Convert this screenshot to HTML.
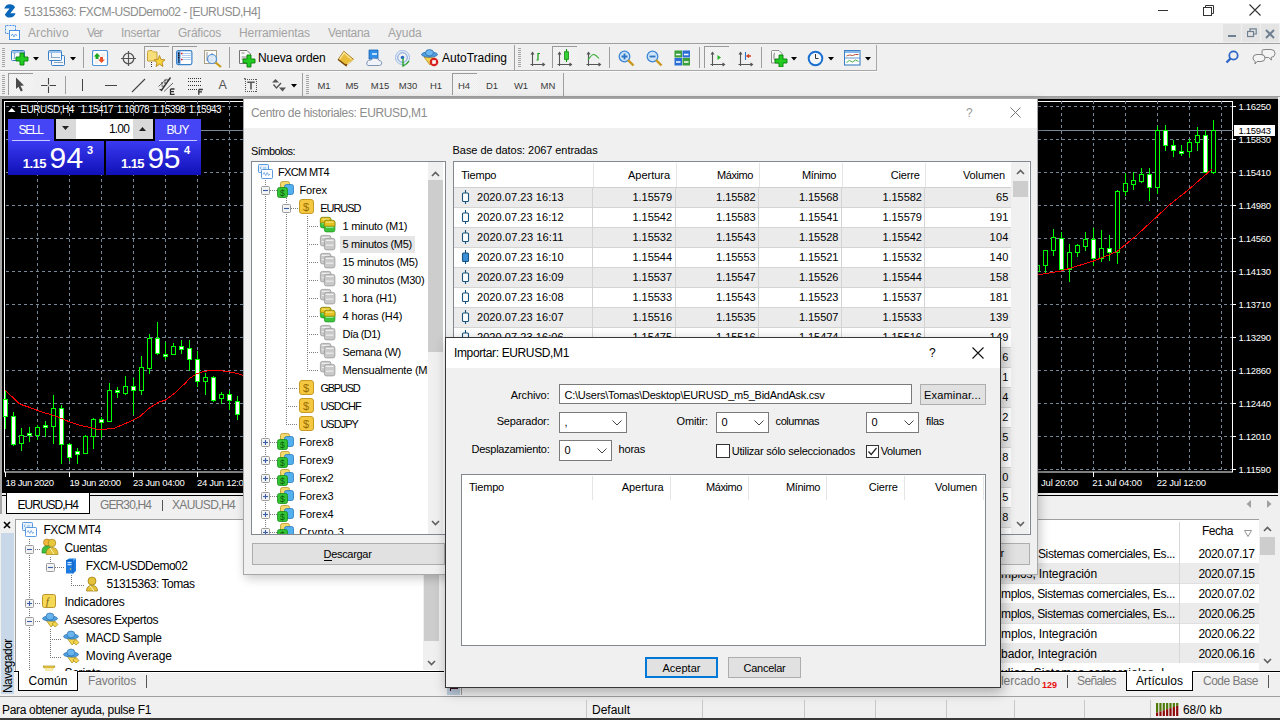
<!DOCTYPE html><html><head><meta charset="utf-8"><style>
html,body{margin:0;padding:0;width:1280px;height:720px;overflow:hidden;background:#f0f0f0;}
body{position:relative;font-family:"Liberation Sans",sans-serif;}
body div,body svg{position:absolute;box-sizing:border-box;}
</style></head><body><div style="left:0px;top:0px;width:1280px;height:23px;background:#fff;"></div><svg style="left:0;top:0" width="22" height="22"><path d="M4.2,8.6 Q5.8,4.2 9.8,4.2 Q13.6,4.2 15.1,7.3 L10.3,13.3 H15.6 Q14.2,17.5 9.8,17.5 Q5.8,17.5 4.9,14.4 L9.5,8.6 Z" fill="#0a66b8"/></svg><div style="left:24.00px;top:6.14px;font-size:12px;line-height:12px;color:#8c8c8c;white-space:pre;letter-spacing:-0.511px;">51315363: FXCM-USDDemo02 - [EURUSD,H4]</div><div style="left:1158px;top:10px;width:10px;height:1px;background:#333;"></div><svg style="left:1203px;top:5px" width="12" height="12"><rect x="0.5" y="2.5" width="8" height="8" fill="none" stroke="#333"/><path d="M2.5,2.5 V0.5 H10.5 V8.5 H8.5" fill="none" stroke="#333"/></svg><svg style="left:1249px;top:4px" width="12" height="12"><path d="M0.5,0.5 L11.5,11.5 M11.5,0.5 L0.5,11.5" stroke="#333" stroke-width="1.1"/></svg><div style="left:0px;top:23px;width:1280px;height:20px;background:#f0f0f0;"></div><div style="left:0px;top:43px;width:1280px;height:1px;background:#a0a0a0;"></div><div style="left:28.00px;top:27.14px;font-size:12px;line-height:12px;color:#a3a3a3;white-space:pre;letter-spacing:0.105px;">Archivo</div><div style="left:87.00px;top:27.14px;font-size:12px;line-height:12px;color:#a3a3a3;white-space:pre;letter-spacing:-0.839px;">Ver</div><div style="left:121.00px;top:27.14px;font-size:12px;line-height:12px;color:#a3a3a3;white-space:pre;letter-spacing:-0.211px;">Insertar</div><div style="left:178.00px;top:27.14px;font-size:12px;line-height:12px;color:#a3a3a3;white-space:pre;letter-spacing:-0.211px;">Gráficos</div><div style="left:239.00px;top:27.14px;font-size:12px;line-height:12px;color:#a3a3a3;white-space:pre;letter-spacing:-0.086px;">Herramientas</div><div style="left:328.00px;top:27.14px;font-size:12px;line-height:12px;color:#a3a3a3;white-space:pre;letter-spacing:-0.364px;">Ventana</div><div style="left:388.00px;top:27.14px;font-size:12px;line-height:12px;color:#a3a3a3;white-space:pre;letter-spacing:-0.013px;">Ayuda</div><svg style="left:5px;top:25px" width="15" height="15"><rect x="0.5" y="0.5" width="10" height="8" fill="#eaf2fb" stroke="#4a90e2" stroke-dasharray="1,0.5"/><rect x="4.5" y="5.5" width="10" height="9" fill="#fff" stroke="#4a90e2"/><path d="M6,11 l1.5,-2 l1.5,3 l1.5,-3 l1.5,2" fill="none" stroke="#4a90e2" stroke-width="0.8"/></svg><div style="left:1223px;top:24px;width:18px;height:18px;background:#e4e4e4;"></div><div style="left:1242px;top:24px;width:18px;height:18px;background:#e4e4e4;"></div><div style="left:1261px;top:24px;width:18px;height:18px;background:#e4e4e4;"></div><div style="left:1228px;top:35px;width:8px;height:2px;background:#6d7f91;"></div><svg style="left:1247px;top:28px" width="10" height="10"><rect x="0.5" y="3.5" width="6" height="5" fill="none" stroke="#6d7f91" stroke-width="1.2"/><path d="M3,3.5 V0.8 H9.2 V6 H6.5" fill="none" stroke="#6d7f91" stroke-width="1.2"/></svg><svg style="left:1265px;top:29px" width="10" height="10"><path d="M1,1 L9,9 M9,1 L1,9" stroke="#6d7f91" stroke-width="2"/></svg><div style="left:0px;top:44px;width:1280px;height:27px;background:#f0f0f0;"></div><div style="left:0px;top:70px;width:877px;height:1px;background:#a8a8a8;"></div><div style="left:876px;top:45px;width:1px;height:26px;background:#a8a8a8;"></div><div style="left:0px;top:71px;width:1280px;height:26px;background:#f0f0f0;"></div><div style="left:0px;top:71px;width:877px;height:1px;background:#fafafa;"></div><div style="left:0px;top:96px;width:1280px;height:1px;background:#a0a0a0;"></div><svg style="left:2px;top:48px" width="3" height="19" viewBox="0 0 3 19"><rect x="0" y="0" width="3" height="1" fill="#a5a5a5"/><rect x="0" y="2" width="3" height="1" fill="#a5a5a5"/><rect x="0" y="4" width="3" height="1" fill="#a5a5a5"/><rect x="0" y="6" width="3" height="1" fill="#a5a5a5"/><rect x="0" y="8" width="3" height="1" fill="#a5a5a5"/><rect x="0" y="10" width="3" height="1" fill="#a5a5a5"/><rect x="0" y="12" width="3" height="1" fill="#a5a5a5"/><rect x="0" y="14" width="3" height="1" fill="#a5a5a5"/><rect x="0" y="16" width="3" height="1" fill="#a5a5a5"/><rect x="0" y="18" width="3" height="1" fill="#a5a5a5"/></svg><svg style="left:11px;top:50px" width="18" height="16" viewBox="0 0 18 16"><rect x="0.5" y="0.5" width="13" height="10" rx="1" fill="#f4f8fc" stroke="#3b7fc4"/><rect x="1" y="1" width="12" height="2" fill="#9cc3ea"/><path d="M3.5,3 v6 M2.5,4 l1,-1 1,1 M2.5,8 l1,1 1,-1" stroke="#7a9cbf" stroke-width="0.8" fill="none"/><path d="M9,3 h4 v4 h4 v4 h-4 v4 h-4 v-4 h-4 v-4 h4z" fill="#22cc22" stroke="#0a7d0a" stroke-width="0.9"/></svg><svg style="left:33px;top:57px" width="6" height="4" viewBox="0 0 6 4"><path d="M0,0 H6 L3,3.5Z" fill="#000"/></svg><svg style="left:48px;top:50px" width="18" height="17" viewBox="0 0 18 17"><rect x="3.5" y="5.5" width="13" height="10" rx="1" fill="#f4f8fc" stroke="#3b7fc4"/><rect x="0.5" y="0.5" width="13" height="10" rx="1" fill="#f4f8fc" stroke="#3b7fc4"/><rect x="1" y="1" width="12" height="2" fill="#9cc3ea"/><path d="M3.5,3 v5 M3,7.5 h9 M6,12.5 h9" stroke="#7a9cbf" stroke-width="0.9" fill="none"/></svg><svg style="left:70px;top:57px" width="6" height="4" viewBox="0 0 6 4"><path d="M0,0 H6 L3,3.5Z" fill="#000"/></svg><div style="left:83px;top:47px;width:1px;height:21px;background:#a0a0a0;"></div><svg style="left:92px;top:50px" width="17" height="17" viewBox="0 0 17 17"><rect x="0.5" y="0.5" width="15" height="15" rx="1.5" fill="#fff" stroke="#4f94d8" stroke-width="1.2"/><path d="M4,3 L7.5,6.5 H5.5 V9 H2.5 V6.5 H0.8Z" fill="#1da61d" transform="translate(1,0)"/><path d="M9.5,13 L6,9.5 H8 V7 H11 V9.5 H13Z" fill="#e8532b" transform="translate(0,0)"/><path d="M9,4h4 M9,6h4 M3,11h3 M3,13h3" stroke="#ccc" stroke-width="0.6"/></svg><svg style="left:120px;top:50px" width="17" height="17" viewBox="0 0 17 17"><circle cx="8.5" cy="8.5" r="5.3" fill="none" stroke="#555" stroke-width="1.3"/><path d="M8.5,1 V16 M1,8.5 H16" stroke="#555" stroke-width="1.2"/></svg><div style="left:144px;top:46px;width:25px;height:22px;border-left:1px solid #9a9a9a;border-top:1px solid #9a9a9a;background-color:#f7f7f7;background-image:linear-gradient(45deg,#ececec 25%,transparent 25%,transparent 75%,#ececec 75%),linear-gradient(45deg,#ececec 25%,transparent 25%,transparent 75%,#ececec 75%);background-size:2px 2px;background-position:0 0,1px 1px;"></div><svg style="left:147px;top:50px" width="19" height="17" viewBox="0 0 19 17"><path d="M0.5,2.5 Q0.5,0.5 2.5,0.5 H5 L6.5,2 H10 V11 H0.5Z" fill="#f6df7a" stroke="#c59b2a" stroke-width="0.9"/><path d="M12.5,5.5 L14,9.5 L18,9.8 L15,12.4 L16,16.5 L12.5,14.2 L9,16.5 L10,12.4 L7,9.8 L11,9.5Z" fill="#f7d63c" stroke="#b9861c" stroke-width="0.9"/><path d="M4.5,12 v5" stroke="#333" stroke-dasharray="1,1"/></svg><div style="left:172px;top:46px;width:25px;height:22px;border-left:1px solid #9a9a9a;border-top:1px solid #9a9a9a;background-color:#f7f7f7;background-image:linear-gradient(45deg,#ececec 25%,transparent 25%,transparent 75%,#ececec 75%),linear-gradient(45deg,#ececec 25%,transparent 25%,transparent 75%,#ececec 75%);background-size:2px 2px;background-position:0 0,1px 1px;"></div><svg style="left:176px;top:50px" width="17" height="16" viewBox="0 0 17 16"><rect x="0.6" y="0.6" width="15.3" height="14" rx="1.8" fill="#fff" stroke="#3c82c9" stroke-width="1.2"/><rect x="1.3" y="1.3" width="3.2" height="12.6" fill="#5b9be0"/><rect x="2" y="8" width="1.6" height="5" fill="#2a4c7a"/><rect x="2" y="2.5" width="1.5" height="1.5" fill="#111"/><rect x="2" y="4.5" width="1.5" height="1.5" fill="#111"/><rect x="2" y="6.5" width="1.5" height="1.5" fill="#111"/><path d="M6,3.5 H15 M6,5.5 H15 M6,7.5 H15 M6,9.5 H15" stroke="#b3cdf0" stroke-width="1" shape-rendering="crispEdges"/><rect x="5" y="2.8" width="1.5" height="1.5" fill="#e02020"/><rect x="5" y="8.8" width="1.5" height="1.5" fill="#e02020"/></svg><svg style="left:204px;top:50px" width="19" height="18" viewBox="0 0 19 18"><rect x="0.5" y="0.5" width="12" height="13" fill="#fdfcf8" stroke="#a89f86"/><path d="M3,2 v9 M3,10 h7 M8,3 v5" stroke="#777" stroke-width="0.8"/><circle cx="8" cy="9" r="4.5" fill="#dbe9f7" fill-opacity="0.85" stroke="#4f8fd8" stroke-width="1.2"/><path d="M11.5,12.5 L17,17" stroke="#c99a1a" stroke-width="2.2"/></svg><div style="left:229px;top:47px;width:1px;height:21px;background:#a0a0a0;"></div><svg style="left:239px;top:50px" width="17" height="18" viewBox="0 0 17 18"><path d="M0.5,0.5 H8 L11.5,4 V13.5 H0.5Z" fill="#fbfbfb" stroke="#666" stroke-width="0.9"/><path d="M2.5,3 h3 M2.5,7 h6 M2.5,9 h5" stroke="#888"/><path d="M8,5 h4 v4 h4 v4 h-4 v4 h-4 v-4 h-4 v-4 h4z" fill="#22cc22" stroke="#0a7d0a" stroke-width="0.9"/></svg><div style="left:258.00px;top:52.04px;font-size:12px;line-height:12px;color:#000;white-space:pre;letter-spacing:-0.102px;">Nueva orden</div><svg style="left:337px;top:50px" width="18" height="17" viewBox="0 0 18 17"><path d="M1.2,9.5 L6.8,1.3 L16.7,9.5 L9,15.6Z" fill="#e9bd3a" stroke="#9a6a12" stroke-width="0.9"/><path d="M2.5,9.3 L7,2.8 L14.5,9.2" fill="none" stroke="#fbe79a" stroke-width="1.3"/><path d="M1.2,9.5 L9,15.6 L9.5,14" stroke="#7a4a08" stroke-width="1.5" fill="none"/><path d="M10,14.5 L16.5,9.6" stroke="#fff3c0" stroke-width="0.9"/></svg><svg style="left:366px;top:49px" width="17" height="18" viewBox="0 0 17 18"><path d="M3,1 H12 V10 H3Z" fill="#2f8ee8" stroke="#1b64b5" stroke-width="0.8"/><rect x="6" y="4" width="5" height="2" fill="#bfe0ff"/><path d="M2,16.5 Q0,16 1,13 Q2,10.5 5,11 Q7,8 10,9.5 Q12.5,9 13,11.5 Q16.5,12 15.5,15 Q15,16.5 13.5,16.5Z" fill="#f0f4fa" stroke="#6e88aa" stroke-width="0.9"/></svg><svg style="left:394px;top:50px" width="17" height="17" viewBox="0 0 17 17"><circle cx="8.5" cy="7.5" r="7" fill="none" stroke="#8fb2e6" stroke-width="0.9"/><circle cx="8.5" cy="7.5" r="4.8" fill="none" stroke="#5b8fdc" stroke-width="0.9"/><circle cx="8.5" cy="7.5" r="1.8" fill="#2b67d1"/><path d="M9,8 V16 Q13,14.5 15,11" stroke="#2aa52a" stroke-width="1.4" fill="none"/></svg><svg style="left:421px;top:49px" width="18" height="18" viewBox="0 0 18 18"><path d="M3,8 L9,16 L14,9Z" fill="#f1d24a" stroke="#b48a1a" stroke-width="0.8"/><ellipse cx="8.5" cy="5.5" rx="8" ry="2.6" fill="#4f9ee0" stroke="#2c6fae" stroke-width="0.8"/><ellipse cx="8.5" cy="3.8" rx="4" ry="3.2" fill="#6db6ef" stroke="#2c6fae" stroke-width="0.8"/><circle cx="13" cy="13" r="4.3" fill="#d92323"/><rect x="11.2" y="11.2" width="3.6" height="3.6" fill="#fff"/></svg><div style="left:442.00px;top:52.04px;font-size:12px;line-height:12px;color:#000;white-space:pre;letter-spacing:0.006px;">AutoTrading</div><div style="left:514px;top:45px;width:1px;height:25px;background:#a0a0a0;"></div><svg style="left:518px;top:48px" width="3" height="19" viewBox="0 0 3 19"><rect x="0" y="0" width="3" height="1" fill="#a5a5a5"/><rect x="0" y="2" width="3" height="1" fill="#a5a5a5"/><rect x="0" y="4" width="3" height="1" fill="#a5a5a5"/><rect x="0" y="6" width="3" height="1" fill="#a5a5a5"/><rect x="0" y="8" width="3" height="1" fill="#a5a5a5"/><rect x="0" y="10" width="3" height="1" fill="#a5a5a5"/><rect x="0" y="12" width="3" height="1" fill="#a5a5a5"/><rect x="0" y="14" width="3" height="1" fill="#a5a5a5"/><rect x="0" y="16" width="3" height="1" fill="#a5a5a5"/><rect x="0" y="18" width="3" height="1" fill="#a5a5a5"/></svg><svg style="left:530px;top:51px" width="16" height="16" viewBox="0 0 16 16"><path d="M2.5,2 V15 M0.5,13.5 H14 M1,3.5 L2.5,1.5 L4,3.5 M12.5,12 L14.5,13.5 L12.5,15" stroke="#555" stroke-width="1.1" fill="none"/><path d="M6.5,9 H8 V2.5 H10" stroke="#129b12" stroke-width="1.2" fill="none"/></svg><div style="left:552px;top:46px;width:25px;height:22px;border-left:1px solid #9a9a9a;border-top:1px solid #9a9a9a;background-color:#f7f7f7;background-image:linear-gradient(45deg,#ececec 25%,transparent 25%,transparent 75%,#ececec 75%),linear-gradient(45deg,#ececec 25%,transparent 25%,transparent 75%,#ececec 75%);background-size:2px 2px;background-position:0 0,1px 1px;"></div><svg style="left:557px;top:49px" width="16" height="18" viewBox="0 0 16 18"><path d="M2.5,4 V17 M0.5,15.5 H14 M1,5.5 L2.5,3.5 L4,5.5 M12.5,14 L14.5,15.5 L12.5,17" stroke="#555" stroke-width="1.1" fill="none"/><path d="M9.5,0 V13" stroke="#129b12" stroke-width="1.2"/><rect x="7.5" y="2.8" width="4" height="7.5" fill="#35d135" stroke="#0f8a0f" stroke-width="0.8"/></svg><svg style="left:586px;top:51px" width="16" height="16" viewBox="0 0 16 16"><path d="M2.5,2 V15 M0.5,13.5 H14 M1,3.5 L2.5,1.5 L4,3.5 M12.5,12 L14.5,13.5 L12.5,15" stroke="#555" stroke-width="1.1" fill="none"/><path d="M2,9 Q6,3 8,3.5 Q10,4 13,7.5" stroke="#2fae2f" stroke-width="1.1" fill="none"/></svg><div style="left:609px;top:47px;width:1px;height:21px;background:#a0a0a0;"></div><svg style="left:618px;top:50px" width="17" height="17" viewBox="0 0 17 17"><circle cx="6.5" cy="6.5" r="5.3" fill="#cfe4f8" stroke="#3b86d6" stroke-width="1.3"/><path d="M10,10 L15.5,15.5" stroke="#c9971c" stroke-width="2.4"/><path d="M3.5,6.5 h6 M6.5,3.5 v6" stroke="#2e76c4" stroke-width="1.8"/></svg><svg style="left:646px;top:50px" width="17" height="17" viewBox="0 0 17 17"><circle cx="6.5" cy="6.5" r="5.3" fill="#cfe4f8" stroke="#3b86d6" stroke-width="1.3"/><path d="M10,10 L15.5,15.5" stroke="#c9971c" stroke-width="2.4"/><path d="M3.5,6.5 h6" stroke="#2e76c4" stroke-width="1.8"/></svg><svg style="left:674px;top:50px" width="17" height="16" viewBox="0 0 17 16"><rect x="0.5" y="0.5" width="7.5" height="7" fill="#3ba03b"/><rect x="8.5" y="0.5" width="7.5" height="7" fill="#2b6fd6"/><rect x="0.5" y="8" width="7.5" height="7.5" fill="#2b6fd6"/><rect x="8.5" y="8" width="7.5" height="7.5" fill="#3ba03b"/><path d="M2,4.5 h4.5 M10,4.5 h4.5 M2,12 h4.5 M10,12 h4.5" stroke="#fff" stroke-width="1.5"/></svg><div style="left:699px;top:47px;width:1px;height:21px;background:#a0a0a0;"></div><div style="left:704px;top:46px;width:25px;height:22px;border-left:1px solid #9a9a9a;border-top:1px solid #9a9a9a;background-color:#f7f7f7;background-image:linear-gradient(45deg,#ececec 25%,transparent 25%,transparent 75%,#ececec 75%),linear-gradient(45deg,#ececec 25%,transparent 25%,transparent 75%,#ececec 75%);background-size:2px 2px;background-position:0 0,1px 1px;"></div><svg style="left:710px;top:51px" width="16" height="16" viewBox="0 0 16 16"><path d="M2.5,2 V15 M0.5,13.5 H14 M1,3.5 L2.5,1.5 L4,3.5 M12.5,12 L14.5,13.5 L12.5,15" stroke="#555" stroke-width="1.1" fill="none"/><path d="M7.5,4 L11,6.5 L7.5,9Z" fill="#25b425"/></svg><svg style="left:738px;top:51px" width="16" height="16" viewBox="0 0 16 16"><path d="M2.5,2 V15 M0.5,13.5 H14 M1,3.5 L2.5,1.5 L4,3.5 M12.5,12 L14.5,13.5 L12.5,15" stroke="#555" stroke-width="1.1" fill="none"/><path d="M7.5,1 V9" stroke="#2b6fc9" stroke-width="1.1"/><path d="M13,5 H9.5 M11,3.5 L9,5 L11,6.5" stroke="#d0421b" stroke-width="1.3" fill="none"/></svg><div style="left:761px;top:47px;width:1px;height:21px;background:#a0a0a0;"></div><svg style="left:771px;top:50px" width="17" height="17" viewBox="0 0 17 17"><path d="M0.5,1.5 Q0.5,0.5 1.5,0.5 H8 L11,3.5 V13 H0.5Z" fill="#f7f7f7" stroke="#777" stroke-width="0.8"/><path d="M4,3 Q3,3 3,5 V8 Q3,10 4,10" stroke="#444" stroke-width="0.7" fill="none"/><path d="M8,5 h4 v4 h4 v4 h-4 v4 h-4 v-4 h-4 v-4 h4z" fill="#22cc22" stroke="#0a7d0a" stroke-width="0.9"/></svg><svg style="left:791px;top:57px" width="6" height="4" viewBox="0 0 6 4"><path d="M0,0 H6 L3,3.5Z" fill="#000"/></svg><svg style="left:807px;top:50px" width="17" height="17" viewBox="0 0 17 17"><circle cx="8.5" cy="8.5" r="7.8" fill="#1a6fd0"/><circle cx="8.5" cy="8.5" r="5.8" fill="#f4f7fa"/><path d="M8.5,4 V8.5 H11.5" stroke="#333" stroke-width="1" fill="none"/></svg><svg style="left:828px;top:57px" width="6" height="4" viewBox="0 0 6 4"><path d="M0,0 H6 L3,3.5Z" fill="#000"/></svg><svg style="left:844px;top:50px" width="17" height="16" viewBox="0 0 17 16"><rect x="0.5" y="0.5" width="15.5" height="14.5" fill="#fff" stroke="#3b7fc4" stroke-width="1.1"/><rect x="1" y="1" width="14.5" height="2" fill="#8ab8e8"/><path d="M1,8 H16" stroke="#3b7fc4" stroke-width="0.8"/><path d="M2.5,6 l3,-1 3,0.5 3,-1 3,0" stroke="#b2401a" stroke-width="0.9" fill="none"/><path d="M2.5,12.5 l3,-2 3,1.5 3,-2 3,1.5" stroke="#2fa52f" stroke-width="0.9" fill="none"/></svg><svg style="left:865px;top:57px" width="6" height="4" viewBox="0 0 6 4"><path d="M0,0 H6 L3,3.5Z" fill="#000"/></svg><svg style="left:1225px;top:50px" width="14" height="14" viewBox="0 0 14 14"><circle cx="8.5" cy="5.5" r="4.2" fill="none" stroke="#2f66c9" stroke-width="1.8"/><path d="M5.5,8.5 L1.5,12.5" stroke="#2f66c9" stroke-width="2.4"/></svg><svg style="left:1252px;top:49px" width="24" height="17" viewBox="0 0 24 17"><path d="M10,1.5 Q10,0.5 14,0.5 H19 Q23,0.5 23,4.5 Q23,8 19,8.5 L19.5,11 L16.5,8.5 H14 Q10,8.5 10,4.5Z" fill="#f4f4f4" stroke="#777" stroke-width="0.9"/><path d="M1,9 Q1,5.5 5,5.5 H9 Q13,5.5 13,9 Q13,12.5 9,12.5 H5 L3,15 L3.2,12.3 Q1,11.5 1,9Z" fill="#f4f4f4" stroke="#777" stroke-width="0.9"/></svg><svg style="left:2px;top:75px" width="3" height="19" viewBox="0 0 3 19"><rect x="0" y="0" width="3" height="1" fill="#a5a5a5"/><rect x="0" y="2" width="3" height="1" fill="#a5a5a5"/><rect x="0" y="4" width="3" height="1" fill="#a5a5a5"/><rect x="0" y="6" width="3" height="1" fill="#a5a5a5"/><rect x="0" y="8" width="3" height="1" fill="#a5a5a5"/><rect x="0" y="10" width="3" height="1" fill="#a5a5a5"/><rect x="0" y="12" width="3" height="1" fill="#a5a5a5"/><rect x="0" y="14" width="3" height="1" fill="#a5a5a5"/><rect x="0" y="16" width="3" height="1" fill="#a5a5a5"/><rect x="0" y="18" width="3" height="1" fill="#a5a5a5"/></svg><div style="left:8px;top:73px;width:25px;height:22px;border-left:1px solid #9a9a9a;border-top:1px solid #9a9a9a;background-color:#f7f7f7;background-image:linear-gradient(45deg,#ececec 25%,transparent 25%,transparent 75%,#ececec 75%),linear-gradient(45deg,#ececec 25%,transparent 25%,transparent 75%,#ececec 75%);background-size:2px 2px;background-position:0 0,1px 1px;"></div><svg style="left:15px;top:77px" width="10" height="16" viewBox="0 0 10 16"><path d="M1,0.5 L9,8.5 L5.5,8.8 L7.8,13.5 L5.8,14.5 L3.5,9.8 L1,12Z" fill="#4a4a4a"/></svg><svg style="left:41px;top:78px" width="16" height="16" viewBox="0 0 16 16"><path d="M7.5,0 V15 M0,7.5 H15" stroke="#444" stroke-width="1.1"/><rect x="6.5" y="6.5" width="2" height="2" fill="#f0f0f0"/></svg><div style="left:65px;top:76px;width:1px;height:18px;background:#a0a0a0;"></div><div style="left:82px;top:79px;width:1px;height:12px;background:#444;"></div><div style="left:105px;top:85px;width:12px;height:1px;background:#444;"></div><svg style="left:131px;top:78px" width="15" height="15" viewBox="0 0 15 15"><path d="M1,14 L14,1" stroke="#444" stroke-width="1.1"/></svg><svg style="left:156px;top:76px" width="20" height="19" viewBox="0 0 20 19"><path d="M2.5,10.5 L10.5,3" stroke="#555" stroke-width="0.9"/><path d="M8,15.5 L17,7" stroke="#555" stroke-width="0.9"/><path d="M5,15 L14.5,1.5" stroke="#333" stroke-width="1.4"/><path d="M3.5,13.5 l2,0 M5.5,10 l2,0 M8,7 l2,0 M10.5,4 l2,0 M6,8.5 l0,-2.5 M9,5.5 l0,-2" stroke="#333" stroke-width="1"/><path d="M14.5,13 h4 M14.5,13 v5.5 h4 M14.5,15.7 h3.5" stroke="#333" stroke-width="1.3" fill="none"/></svg><svg style="left:187px;top:77px" width="17" height="18" viewBox="0 0 17 18"><rect x="1" y="1" width="1" height="1" fill="#333"/><rect x="3" y="1" width="1" height="1" fill="#333"/><rect x="5" y="1" width="1" height="1" fill="#333"/><rect x="7" y="1" width="1" height="1" fill="#333"/><rect x="9" y="1" width="1" height="1" fill="#333"/><rect x="11" y="1" width="1" height="1" fill="#333"/><rect x="13" y="1" width="1" height="1" fill="#333"/><rect x="1" y="4" width="1" height="1" fill="#333"/><rect x="3" y="4" width="1" height="1" fill="#333"/><rect x="5" y="4" width="1" height="1" fill="#333"/><rect x="7" y="4" width="1" height="1" fill="#333"/><rect x="9" y="4" width="1" height="1" fill="#333"/><rect x="11" y="4" width="1" height="1" fill="#333"/><rect x="13" y="4" width="1" height="1" fill="#333"/><rect x="1" y="8" width="1" height="1" fill="#333"/><rect x="3" y="8" width="1" height="1" fill="#333"/><rect x="5" y="8" width="1" height="1" fill="#333"/><rect x="7" y="8" width="1" height="1" fill="#333"/><rect x="9" y="8" width="1" height="1" fill="#333"/><rect x="11" y="8" width="1" height="1" fill="#333"/><rect x="13" y="8" width="1" height="1" fill="#333"/><rect x="1" y="12" width="1" height="1" fill="#333"/><rect x="3" y="12" width="1" height="1" fill="#333"/><rect x="5" y="12" width="1" height="1" fill="#333"/><rect x="7" y="12" width="1" height="1" fill="#333"/><rect x="9" y="12" width="1" height="1" fill="#333"/><path d="M11.8,12.5 h4 M11.8,12.5 v5.2 M11.8,14.9 h3.2" stroke="#333" stroke-width="1.3" fill="none"/></svg><div style="left:218.60px;top:79.22px;font-size:12.5px;line-height:12.5px;color:#555;white-space:pre;-webkit-font-smoothing:antialiased;">A</div><svg style="left:244px;top:78px" width="14" height="15" viewBox="0 0 14 15"><rect x="1" y="1" width="1" height="1" fill="#555"/><rect x="1" y="13" width="1" height="1" fill="#555"/><rect x="3" y="1" width="1" height="1" fill="#555"/><rect x="3" y="13" width="1" height="1" fill="#555"/><rect x="5" y="1" width="1" height="1" fill="#555"/><rect x="5" y="13" width="1" height="1" fill="#555"/><rect x="7" y="1" width="1" height="1" fill="#555"/><rect x="7" y="13" width="1" height="1" fill="#555"/><rect x="9" y="1" width="1" height="1" fill="#555"/><rect x="9" y="13" width="1" height="1" fill="#555"/><rect x="11" y="1" width="1" height="1" fill="#555"/><rect x="11" y="13" width="1" height="1" fill="#555"/><rect x="1" y="1" width="1" height="1" fill="#555"/><rect x="12" y="1" width="1" height="1" fill="#555"/><rect x="1" y="3" width="1" height="1" fill="#555"/><rect x="12" y="3" width="1" height="1" fill="#555"/><rect x="1" y="5" width="1" height="1" fill="#555"/><rect x="12" y="5" width="1" height="1" fill="#555"/><rect x="1" y="7" width="1" height="1" fill="#555"/><rect x="12" y="7" width="1" height="1" fill="#555"/><rect x="1" y="9" width="1" height="1" fill="#555"/><rect x="12" y="9" width="1" height="1" fill="#555"/><rect x="1" y="11" width="1" height="1" fill="#555"/><rect x="12" y="11" width="1" height="1" fill="#555"/><rect x="1" y="13" width="1" height="1" fill="#555"/><rect x="12" y="13" width="1" height="1" fill="#555"/><rect x="0" y="0" width="1.6" height="1.3" fill="#555"/><path d="M3.3,4.2 H10.7 M7,4.2 V11.6" stroke="#555" stroke-width="1.6"/></svg><svg style="left:271px;top:78px" width="16" height="16" viewBox="0 0 16 16"><path d="M1,4.5 L4.5,1 L8,4.5Z" fill="#555"/><path d="M8,9.5 L11.5,13.5 L15,9.5Z" fill="#555"/><path d="M2.5,6.5 L5.5,10 L10,5" stroke="#555" stroke-width="1.4" fill="none"/></svg><svg style="left:291px;top:84px" width="6" height="4" viewBox="0 0 6 4"><path d="M0,0 H6 L3,3.5Z" fill="#000"/></svg><div style="left:302px;top:73px;width:1px;height:24px;background:#a0a0a0;"></div><svg style="left:306px;top:75px" width="3" height="19" viewBox="0 0 3 19"><rect x="0" y="0" width="3" height="1" fill="#a5a5a5"/><rect x="0" y="2" width="3" height="1" fill="#a5a5a5"/><rect x="0" y="4" width="3" height="1" fill="#a5a5a5"/><rect x="0" y="6" width="3" height="1" fill="#a5a5a5"/><rect x="0" y="8" width="3" height="1" fill="#a5a5a5"/><rect x="0" y="10" width="3" height="1" fill="#a5a5a5"/><rect x="0" y="12" width="3" height="1" fill="#a5a5a5"/><rect x="0" y="14" width="3" height="1" fill="#a5a5a5"/><rect x="0" y="16" width="3" height="1" fill="#a5a5a5"/><rect x="0" y="18" width="3" height="1" fill="#a5a5a5"/></svg><div style="left:317.40px;top:80.76px;font-size:9.5px;line-height:9.5px;color:#3a3a3a;white-space:pre;">M1</div><div style="left:345.40px;top:80.76px;font-size:9.5px;line-height:9.5px;color:#3a3a3a;white-space:pre;">M5</div><div style="left:370.76px;top:80.76px;font-size:9.5px;line-height:9.5px;color:#3a3a3a;white-space:pre;">M15</div><div style="left:398.76px;top:80.76px;font-size:9.5px;line-height:9.5px;color:#3a3a3a;white-space:pre;">M30</div><div style="left:429.92px;top:80.76px;font-size:9.5px;line-height:9.5px;color:#3a3a3a;white-space:pre;">H1</div><div style="left:452px;top:73px;width:25px;height:22px;border-left:1px solid #9a9a9a;border-top:1px solid #9a9a9a;background-color:#f7f7f7;background-image:linear-gradient(45deg,#ececec 25%,transparent 25%,transparent 75%,#ececec 75%),linear-gradient(45deg,#ececec 25%,transparent 25%,transparent 75%,#ececec 75%);background-size:2px 2px;background-position:0 0,1px 1px;"></div><div style="left:457.92px;top:80.76px;font-size:9.5px;line-height:9.5px;color:#3a3a3a;white-space:pre;">H4</div><div style="left:485.92px;top:80.76px;font-size:9.5px;line-height:9.5px;color:#3a3a3a;white-space:pre;">D1</div><div style="left:513.88px;top:80.76px;font-size:9.5px;line-height:9.5px;color:#3a3a3a;white-space:pre;">W1</div><div style="left:540.61px;top:80.76px;font-size:9.5px;line-height:9.5px;color:#3a3a3a;white-space:pre;">MN</div><div style="left:563px;top:73px;width:1px;height:24px;background:#a0a0a0;"></div><div style="left:0px;top:97px;width:1280px;height:396px;background:#000;"></div><div style="left:0px;top:97px;width:2px;height:396px;background:#a8a8a8;"></div><div style="left:0px;top:97px;width:1280px;height:2px;background:#a8a8a8;"></div><div style="left:1278px;top:97px;width:2px;height:396px;background:#f0f0f0;"></div><svg style="left:0;top:0" width="1280" height="493"><rect x="4.5" y="101.5" width="1228" height="370.5" fill="none" stroke="#fff" stroke-width="1"/><line x1="6" y1="106.5" x2="1232" y2="106.5" stroke="#778899" stroke-dasharray="3,3"/><line x1="6" y1="139.5" x2="1232" y2="139.5" stroke="#778899" stroke-dasharray="3,3"/><line x1="6" y1="172.5" x2="1232" y2="172.5" stroke="#778899" stroke-dasharray="3,3"/><line x1="6" y1="205.5" x2="1232" y2="205.5" stroke="#778899" stroke-dasharray="3,3"/><line x1="6" y1="238.5" x2="1232" y2="238.5" stroke="#778899" stroke-dasharray="3,3"/><line x1="6" y1="271.5" x2="1232" y2="271.5" stroke="#778899" stroke-dasharray="3,3"/><line x1="6" y1="304.5" x2="1232" y2="304.5" stroke="#778899" stroke-dasharray="3,3"/><line x1="6" y1="337.5" x2="1232" y2="337.5" stroke="#778899" stroke-dasharray="3,3"/><line x1="6" y1="370.5" x2="1232" y2="370.5" stroke="#778899" stroke-dasharray="3,3"/><line x1="6" y1="403.5" x2="1232" y2="403.5" stroke="#778899" stroke-dasharray="3,3"/><line x1="6" y1="436.5" x2="1232" y2="436.5" stroke="#778899" stroke-dasharray="3,3"/><line x1="6" y1="469.5" x2="1232" y2="469.5" stroke="#778899" stroke-dasharray="3,3"/><line x1="37.5" y1="101" x2="37.5" y2="472" stroke="#778899" stroke-dasharray="3,3"/><line x1="69.5" y1="101" x2="69.5" y2="472" stroke="#778899" stroke-dasharray="3,3"/><line x1="101.5" y1="101" x2="101.5" y2="472" stroke="#778899" stroke-dasharray="3,3"/><line x1="133.5" y1="101" x2="133.5" y2="472" stroke="#778899" stroke-dasharray="3,3"/><line x1="165.5" y1="101" x2="165.5" y2="472" stroke="#778899" stroke-dasharray="3,3"/><line x1="197.5" y1="101" x2="197.5" y2="472" stroke="#778899" stroke-dasharray="3,3"/><line x1="229.5" y1="101" x2="229.5" y2="472" stroke="#778899" stroke-dasharray="3,3"/><line x1="261.5" y1="101" x2="261.5" y2="472" stroke="#778899" stroke-dasharray="3,3"/><line x1="293.5" y1="101" x2="293.5" y2="472" stroke="#778899" stroke-dasharray="3,3"/><line x1="325.5" y1="101" x2="325.5" y2="472" stroke="#778899" stroke-dasharray="3,3"/><line x1="357.5" y1="101" x2="357.5" y2="472" stroke="#778899" stroke-dasharray="3,3"/><line x1="389.5" y1="101" x2="389.5" y2="472" stroke="#778899" stroke-dasharray="3,3"/><line x1="421.5" y1="101" x2="421.5" y2="472" stroke="#778899" stroke-dasharray="3,3"/><line x1="453.5" y1="101" x2="453.5" y2="472" stroke="#778899" stroke-dasharray="3,3"/><line x1="485.5" y1="101" x2="485.5" y2="472" stroke="#778899" stroke-dasharray="3,3"/><line x1="517.5" y1="101" x2="517.5" y2="472" stroke="#778899" stroke-dasharray="3,3"/><line x1="549.5" y1="101" x2="549.5" y2="472" stroke="#778899" stroke-dasharray="3,3"/><line x1="581.5" y1="101" x2="581.5" y2="472" stroke="#778899" stroke-dasharray="3,3"/><line x1="613.5" y1="101" x2="613.5" y2="472" stroke="#778899" stroke-dasharray="3,3"/><line x1="645.5" y1="101" x2="645.5" y2="472" stroke="#778899" stroke-dasharray="3,3"/><line x1="677.5" y1="101" x2="677.5" y2="472" stroke="#778899" stroke-dasharray="3,3"/><line x1="709.5" y1="101" x2="709.5" y2="472" stroke="#778899" stroke-dasharray="3,3"/><line x1="741.5" y1="101" x2="741.5" y2="472" stroke="#778899" stroke-dasharray="3,3"/><line x1="773.5" y1="101" x2="773.5" y2="472" stroke="#778899" stroke-dasharray="3,3"/><line x1="805.5" y1="101" x2="805.5" y2="472" stroke="#778899" stroke-dasharray="3,3"/><line x1="837.5" y1="101" x2="837.5" y2="472" stroke="#778899" stroke-dasharray="3,3"/><line x1="869.5" y1="101" x2="869.5" y2="472" stroke="#778899" stroke-dasharray="3,3"/><line x1="901.5" y1="101" x2="901.5" y2="472" stroke="#778899" stroke-dasharray="3,3"/><line x1="933.5" y1="101" x2="933.5" y2="472" stroke="#778899" stroke-dasharray="3,3"/><line x1="965.5" y1="101" x2="965.5" y2="472" stroke="#778899" stroke-dasharray="3,3"/><line x1="997.5" y1="101" x2="997.5" y2="472" stroke="#778899" stroke-dasharray="3,3"/><line x1="1029.5" y1="101" x2="1029.5" y2="472" stroke="#778899" stroke-dasharray="3,3"/><line x1="1061.5" y1="101" x2="1061.5" y2="472" stroke="#778899" stroke-dasharray="3,3"/><line x1="1093.5" y1="101" x2="1093.5" y2="472" stroke="#778899" stroke-dasharray="3,3"/><line x1="1125.5" y1="101" x2="1125.5" y2="472" stroke="#778899" stroke-dasharray="3,3"/><line x1="1157.5" y1="101" x2="1157.5" y2="472" stroke="#778899" stroke-dasharray="3,3"/><line x1="1189.5" y1="101" x2="1189.5" y2="472" stroke="#778899" stroke-dasharray="3,3"/><line x1="1221.5" y1="101" x2="1221.5" y2="472" stroke="#778899" stroke-dasharray="3,3"/><line x1="1233" y1="106.5" x2="1236" y2="106.5" stroke="#fff"/><line x1="1233" y1="139.5" x2="1236" y2="139.5" stroke="#fff"/><line x1="1233" y1="172.5" x2="1236" y2="172.5" stroke="#fff"/><line x1="1233" y1="205.5" x2="1236" y2="205.5" stroke="#fff"/><line x1="1233" y1="238.5" x2="1236" y2="238.5" stroke="#fff"/><line x1="1233" y1="271.5" x2="1236" y2="271.5" stroke="#fff"/><line x1="1233" y1="304.5" x2="1236" y2="304.5" stroke="#fff"/><line x1="1233" y1="337.5" x2="1236" y2="337.5" stroke="#fff"/><line x1="1233" y1="370.5" x2="1236" y2="370.5" stroke="#fff"/><line x1="1233" y1="403.5" x2="1236" y2="403.5" stroke="#fff"/><line x1="1233" y1="436.5" x2="1236" y2="436.5" stroke="#fff"/><line x1="1233" y1="469.5" x2="1236" y2="469.5" stroke="#fff"/><line x1="5" y1="130.5" x2="1233" y2="130.5" stroke="#778899"/><line x1="5.5" y1="390" x2="5.5" y2="429" stroke="#00ff00"/><rect x="3.5" y="399.5" width="4" height="17" fill="#fff" stroke="#00ff00"/><line x1="13.5" y1="412" x2="13.5" y2="446" stroke="#00ff00"/><rect x="11.5" y="416.5" width="4" height="28" fill="#fff" stroke="#00ff00"/><line x1="21.5" y1="428" x2="21.5" y2="451" stroke="#00ff00"/><rect x="19.5" y="435.5" width="4" height="8" fill="#000" stroke="#00ff00"/><line x1="29.5" y1="427" x2="29.5" y2="442" stroke="#00ff00"/><rect x="27.5" y="433.5" width="4" height="2" fill="#fff" stroke="#00ff00"/><line x1="37.5" y1="425" x2="37.5" y2="440" stroke="#00ff00"/><rect x="35.5" y="427.5" width="4" height="8" fill="#000" stroke="#00ff00"/><line x1="45.5" y1="421" x2="45.5" y2="437" stroke="#00ff00"/><rect x="43.5" y="425.5" width="4" height="2" fill="#fff" stroke="#00ff00"/><line x1="53.5" y1="395" x2="53.5" y2="444" stroke="#00ff00"/><rect x="51.5" y="408.5" width="4" height="18" fill="#000" stroke="#00ff00"/><line x1="61.5" y1="405" x2="61.5" y2="464" stroke="#00ff00"/><rect x="59.5" y="408.5" width="4" height="36" fill="#fff" stroke="#00ff00"/><line x1="69.5" y1="443" x2="69.5" y2="461" stroke="#00ff00"/><rect x="67.5" y="444.5" width="4" height="13" fill="#fff" stroke="#00ff00"/><line x1="77.5" y1="448" x2="77.5" y2="464" stroke="#00ff00"/><rect x="75.5" y="451.5" width="4" height="3" fill="#fff" stroke="#00ff00"/><line x1="85.5" y1="435" x2="85.5" y2="454" stroke="#00ff00"/><rect x="83.5" y="436.5" width="4" height="17" fill="#000" stroke="#00ff00"/><line x1="93.5" y1="418" x2="93.5" y2="449" stroke="#00ff00"/><rect x="91.5" y="419.5" width="4" height="17" fill="#000" stroke="#00ff00"/><line x1="101.5" y1="417" x2="101.5" y2="438" stroke="#00ff00"/><rect x="99.5" y="419.5" width="4" height="3" fill="#fff" stroke="#00ff00"/><line x1="109.5" y1="383" x2="109.5" y2="422" stroke="#00ff00"/><rect x="107.5" y="390.5" width="4" height="31" fill="#000" stroke="#00ff00"/><line x1="117.5" y1="387" x2="117.5" y2="398" stroke="#00ff00"/><rect x="115.5" y="390.5" width="4" height="2" fill="#fff" stroke="#00ff00"/><line x1="125.5" y1="376" x2="125.5" y2="395" stroke="#00ff00"/><rect x="123.5" y="386.5" width="4" height="7" fill="#000" stroke="#00ff00"/><line x1="133.5" y1="378" x2="133.5" y2="415" stroke="#00ff00"/><rect x="131.5" y="386.5" width="4" height="4" fill="#fff" stroke="#00ff00"/><line x1="141.5" y1="356" x2="141.5" y2="395" stroke="#00ff00"/><rect x="139.5" y="367.5" width="4" height="23" fill="#000" stroke="#00ff00"/><line x1="149.5" y1="334" x2="149.5" y2="374" stroke="#00ff00"/><rect x="147.5" y="338.5" width="4" height="30" fill="#000" stroke="#00ff00"/><line x1="157.5" y1="322" x2="157.5" y2="355" stroke="#00ff00"/><rect x="155.5" y="338.5" width="4" height="15" fill="#fff" stroke="#00ff00"/><line x1="165.5" y1="342" x2="165.5" y2="360" stroke="#00ff00"/><rect x="163.5" y="354.5" width="4" height="2" fill="#fff" stroke="#00ff00"/><line x1="173.5" y1="343" x2="173.5" y2="355" stroke="#00ff00"/><rect x="171.5" y="346.5" width="4" height="8" fill="#000" stroke="#00ff00"/><line x1="181.5" y1="340" x2="181.5" y2="354" stroke="#00ff00"/><rect x="179.5" y="346.5" width="4" height="3" fill="#fff" stroke="#00ff00"/><line x1="189.5" y1="340" x2="189.5" y2="371" stroke="#00ff00"/><rect x="187.5" y="348.5" width="4" height="11" fill="#fff" stroke="#00ff00"/><line x1="197.5" y1="351" x2="197.5" y2="387" stroke="#00ff00"/><rect x="195.5" y="359.5" width="4" height="22" fill="#fff" stroke="#00ff00"/><line x1="205.5" y1="373" x2="205.5" y2="395" stroke="#00ff00"/><rect x="203.5" y="377.5" width="4" height="4" fill="#000" stroke="#00ff00"/><line x1="213.5" y1="376" x2="213.5" y2="402" stroke="#00ff00"/><rect x="211.5" y="377.5" width="4" height="23" fill="#fff" stroke="#00ff00"/><line x1="221.5" y1="392" x2="221.5" y2="404" stroke="#00ff00"/><rect x="219.5" y="394.5" width="4" height="4" fill="#000" stroke="#00ff00"/><line x1="229.5" y1="391" x2="229.5" y2="410" stroke="#00ff00"/><rect x="227.5" y="394.5" width="4" height="6" fill="#fff" stroke="#00ff00"/><line x1="237.5" y1="396" x2="237.5" y2="420" stroke="#00ff00"/><rect x="235.5" y="401.5" width="4" height="13" fill="#fff" stroke="#00ff00"/><line x1="1037.5" y1="262" x2="1037.5" y2="276" stroke="#00ff00"/><rect x="1035.5" y="265.5" width="4" height="6" fill="#000" stroke="#00ff00"/><line x1="1045.5" y1="250" x2="1045.5" y2="273" stroke="#00ff00"/><rect x="1043.5" y="250.5" width="4" height="15" fill="#000" stroke="#00ff00"/><line x1="1053.5" y1="229" x2="1053.5" y2="256" stroke="#00ff00"/><rect x="1051.5" y="237.5" width="4" height="13" fill="#000" stroke="#00ff00"/><line x1="1061.5" y1="232" x2="1061.5" y2="270" stroke="#00ff00"/><rect x="1059.5" y="238.5" width="4" height="31" fill="#fff" stroke="#00ff00"/><line x1="1069.5" y1="244" x2="1069.5" y2="282" stroke="#00ff00"/><rect x="1067.5" y="252.5" width="4" height="17" fill="#000" stroke="#00ff00"/><line x1="1077.5" y1="244" x2="1077.5" y2="257" stroke="#00ff00"/><rect x="1075.5" y="245.5" width="4" height="7" fill="#000" stroke="#00ff00"/><line x1="1085.5" y1="232" x2="1085.5" y2="251" stroke="#00ff00"/><rect x="1083.5" y="239.5" width="4" height="7" fill="#000" stroke="#00ff00"/><line x1="1093.5" y1="228" x2="1093.5" y2="266" stroke="#00ff00"/><rect x="1091.5" y="239.5" width="4" height="19" fill="#fff" stroke="#00ff00"/><line x1="1101.5" y1="230" x2="1101.5" y2="262" stroke="#00ff00"/><rect x="1099.5" y="248.5" width="4" height="10" fill="#000" stroke="#00ff00"/><line x1="1109.5" y1="235" x2="1109.5" y2="261" stroke="#00ff00"/><rect x="1107.5" y="248.5" width="4" height="4" fill="#fff" stroke="#00ff00"/><line x1="1117.5" y1="190" x2="1117.5" y2="264" stroke="#00ff00"/><rect x="1115.5" y="191.5" width="4" height="61" fill="#000" stroke="#00ff00"/><line x1="1125.5" y1="173" x2="1125.5" y2="196" stroke="#00ff00"/><rect x="1123.5" y="183.5" width="4" height="8" fill="#000" stroke="#00ff00"/><line x1="1133.5" y1="172" x2="1133.5" y2="190" stroke="#00ff00"/><rect x="1131.5" y="180.5" width="4" height="4" fill="#000" stroke="#00ff00"/><line x1="1141.5" y1="168" x2="1141.5" y2="183" stroke="#00ff00"/><rect x="1139.5" y="174.5" width="4" height="7" fill="#000" stroke="#00ff00"/><line x1="1149.5" y1="168" x2="1149.5" y2="201" stroke="#00ff00"/><rect x="1147.5" y="174.5" width="4" height="13" fill="#fff" stroke="#00ff00"/><line x1="1157.5" y1="126" x2="1157.5" y2="194" stroke="#00ff00"/><rect x="1155.5" y="130.5" width="4" height="57" fill="#000" stroke="#00ff00"/><line x1="1165.5" y1="125" x2="1165.5" y2="151" stroke="#00ff00"/><rect x="1163.5" y="130.5" width="4" height="15" fill="#fff" stroke="#00ff00"/><line x1="1173.5" y1="140" x2="1173.5" y2="157" stroke="#00ff00"/><rect x="1171.5" y="145.5" width="4" height="5" fill="#fff" stroke="#00ff00"/><line x1="1181.5" y1="145" x2="1181.5" y2="156" stroke="#00ff00"/><rect x="1179.5" y="151.5" width="4" height="2" fill="#fff" stroke="#00ff00"/><line x1="1189.5" y1="139" x2="1189.5" y2="157" stroke="#00ff00"/><rect x="1187.5" y="142.5" width="4" height="9" fill="#000" stroke="#00ff00"/><line x1="1197.5" y1="127" x2="1197.5" y2="151" stroke="#00ff00"/><rect x="1195.5" y="135.5" width="4" height="7" fill="#000" stroke="#00ff00"/><line x1="1205.5" y1="130" x2="1205.5" y2="173" stroke="#00ff00"/><rect x="1203.5" y="135.5" width="4" height="37" fill="#fff" stroke="#00ff00"/><line x1="1213.5" y1="120" x2="1213.5" y2="174" stroke="#00ff00"/><rect x="1211.5" y="130.5" width="4" height="42" fill="#000" stroke="#00ff00"/><polyline fill="none" shape-rendering="crispEdges" stroke="#ff0000" stroke-width="1" points="5.5,390.4 15,399.6 20,404.2 30,407.5 37.5,410.4 45,412.9 50,414.2 58,417 65,420 70,422 80,425.4 90,427.5 100,430 115,428 130,421.5 140,416.3 150,407.5 160,401.6 165,400.4 175,392.8 185,383.4 190,378.2 197,373.5 205,371.1 215,370.6 225,371.1 235,372.9 243,375.2"/><polyline fill="none" shape-rendering="crispEdges" stroke="#ff0000" stroke-width="1" points="1038,274.8 1061,271 1093,261.2 1110,254.5 1117,251.4 1135,236.8 1153.3,219.9 1168.9,205.3 1188.4,189.8 1211.7,169.3"/><line x1="5.5" y1="472" x2="5.5" y2="477" stroke="#fff"/><line x1="69.5" y1="472" x2="69.5" y2="477" stroke="#fff"/><line x1="133.5" y1="472" x2="133.5" y2="477" stroke="#fff"/><line x1="197.5" y1="472" x2="197.5" y2="477" stroke="#fff"/><line x1="1093.5" y1="472" x2="1093.5" y2="477" stroke="#fff"/><line x1="1157.5" y1="472" x2="1157.5" y2="477" stroke="#fff"/></svg><div style="left:1238.50px;top:101.76px;font-size:9.5px;line-height:9.5px;color:#fff;white-space:pre;letter-spacing:-0.292px;">1.16250</div><div style="left:1238.50px;top:134.76px;font-size:9.5px;line-height:9.5px;color:#fff;white-space:pre;letter-spacing:-0.292px;">1.15830</div><div style="left:1238.50px;top:167.76px;font-size:9.5px;line-height:9.5px;color:#fff;white-space:pre;letter-spacing:-0.292px;">1.15410</div><div style="left:1238.50px;top:200.76px;font-size:9.5px;line-height:9.5px;color:#fff;white-space:pre;letter-spacing:-0.292px;">1.14980</div><div style="left:1238.50px;top:233.76px;font-size:9.5px;line-height:9.5px;color:#fff;white-space:pre;letter-spacing:-0.292px;">1.14560</div><div style="left:1238.50px;top:266.76px;font-size:9.5px;line-height:9.5px;color:#fff;white-space:pre;letter-spacing:-0.292px;">1.14130</div><div style="left:1238.50px;top:299.76px;font-size:9.5px;line-height:9.5px;color:#fff;white-space:pre;letter-spacing:-0.292px;">1.13710</div><div style="left:1238.50px;top:332.76px;font-size:9.5px;line-height:9.5px;color:#fff;white-space:pre;letter-spacing:-0.292px;">1.13290</div><div style="left:1238.50px;top:365.76px;font-size:9.5px;line-height:9.5px;color:#fff;white-space:pre;letter-spacing:-0.292px;">1.12860</div><div style="left:1238.50px;top:398.76px;font-size:9.5px;line-height:9.5px;color:#fff;white-space:pre;letter-spacing:-0.292px;">1.12440</div><div style="left:1238.50px;top:431.76px;font-size:9.5px;line-height:9.5px;color:#fff;white-space:pre;letter-spacing:-0.292px;">1.12010</div><div style="left:1238.50px;top:464.76px;font-size:9.5px;line-height:9.5px;color:#fff;white-space:pre;letter-spacing:-0.192px;">1.11590</div><div style="left:1234px;top:125px;width:41px;height:11px;background:#fff;"></div><div style="left:1238.50px;top:125.76px;font-size:9.5px;line-height:9.5px;color:#000;white-space:pre;letter-spacing:-0.292px;">1.15943</div><div style="left:5.60px;top:478.16px;font-size:9.5px;line-height:9.5px;color:#fff;white-space:pre;letter-spacing:-0.391px;">18 Jun 2020</div><div style="left:69.40px;top:478.16px;font-size:9.5px;line-height:9.5px;color:#fff;white-space:pre;letter-spacing:-0.303px;">19 Jun 20:00</div><div style="left:133.00px;top:478.16px;font-size:9.5px;line-height:9.5px;color:#fff;white-space:pre;letter-spacing:-0.286px;">23 Jun 04:00</div><div style="left:197.00px;top:478.16px;font-size:9.5px;line-height:9.5px;color:#fff;white-space:pre;letter-spacing:-0.286px;">24 Jun 12:00</div><div style="left:1041.00px;top:478.16px;font-size:9.5px;line-height:9.5px;color:#fff;white-space:pre;letter-spacing:-0.174px;">Jul 20:00</div><div style="left:1092.30px;top:478.16px;font-size:9.5px;line-height:9.5px;color:#fff;white-space:pre;letter-spacing:-0.189px;">21 Jul 04:00</div><div style="left:1156.80px;top:478.16px;font-size:9.5px;line-height:9.5px;color:#fff;white-space:pre;letter-spacing:-0.230px;">22 Jul 12:00</div><div style="left:20.30px;top:105.13px;font-size:10px;line-height:10px;color:#fff;white-space:pre;letter-spacing:-0.477px;">EURUSD,H4</div><div style="left:80.60px;top:105.13px;font-size:10px;line-height:10px;color:#fff;white-space:pre;letter-spacing:-0.537px;">1.15417</div><div style="left:116.70px;top:105.13px;font-size:10px;line-height:10px;color:#fff;white-space:pre;letter-spacing:-0.551px;">1.16078</div><div style="left:152.60px;top:105.13px;font-size:10px;line-height:10px;color:#fff;white-space:pre;letter-spacing:-0.537px;">1.15398</div><div style="left:188.80px;top:105.13px;font-size:10px;line-height:10px;color:#fff;white-space:pre;letter-spacing:-0.565px;">1.15943</div><svg style="left:8px;top:107px" width="8" height="6"><path d="M0,5 L3.75,1 L7.5,5Z" fill="#fff"/></svg><div style="left:8px;top:119px;width:193px;height:56px;background:#000;"></div><div style="left:8px;top:119px;width:46px;height:22px;background:#4545f5;"></div><div style="left:12px;top:140px;width:38px;height:1px;background:#c8c8ff;"></div><div style="left:18.50px;top:124.14px;font-size:12px;line-height:12px;color:#fff;white-space:pre;letter-spacing:-1.340px;">SELL</div><div style="left:155px;top:119px;width:46px;height:22px;background:#4545f5;"></div><div style="left:159px;top:140px;width:38px;height:1px;background:#c8c8ff;"></div><div style="left:166.50px;top:124.14px;font-size:12px;line-height:12px;color:#fff;white-space:pre;letter-spacing:-0.896px;">BUY</div><div style="left:56px;top:119px;width:20px;height:20px;background:#d9d9d9;"></div><div style="left:133px;top:119px;width:20px;height:20px;background:#d9d9d9;"></div><div style="left:76px;top:119px;width:57px;height:20px;background:#fff;"></div><svg style="left:62px;top:126px" width="8" height="5"><path d="M0,0 H7 L3.5,4Z" fill="#222"/></svg><svg style="left:139px;top:127px" width="8" height="5"><path d="M0,4 H7 L3.5,0Z" fill="#222"/></svg><div style="left:109.00px;top:122.84px;font-size:12px;line-height:12px;color:#000;white-space:pre;letter-spacing:-0.840px;">1.00</div><div style="left:8px;top:141px;width:96px;height:34px;background:linear-gradient(#3a3af2,#1010b8);"></div><div style="left:106px;top:141px;width:95px;height:34px;background:linear-gradient(#3a3af2,#1010b8);"></div><div style="left:22.80px;top:157.20px;font-size:13px;line-height:13px;color:#fff;white-space:pre;letter-spacing:-0.578px;font-weight:bold;">1.15</div><div style="left:49.50px;top:142.80px;font-size:30px;line-height:30px;color:#fff;white-space:pre;letter-spacing:0.312px;">94</div><div style="left:87.00px;top:144.69px;font-size:11px;line-height:11px;color:#fff;white-space:pre;font-weight:bold;">3</div><div style="left:121.00px;top:157.20px;font-size:13px;line-height:13px;color:#fff;white-space:pre;letter-spacing:-0.578px;font-weight:bold;">1.15</div><div style="left:147.50px;top:142.80px;font-size:30px;line-height:30px;color:#fff;white-space:pre;letter-spacing:-0.438px;">95</div><div style="left:184.00px;top:144.69px;font-size:11px;line-height:11px;color:#fff;white-space:pre;font-weight:bold;">4</div><div style="left:0px;top:493px;width:1280px;height:26px;background:#f0f0f0;"></div><div style="left:0px;top:493px;width:2px;height:3px;background:#a8a8a8;"></div><div style="left:89px;top:495px;width:1189px;height:1px;background:#000;"></div><div style="left:0px;top:495px;width:7px;height:1px;background:#000;"></div><div style="left:6px;top:493px;width:84px;height:21px;background:#fff;border:1px solid #000;border-top:none;"></div><div style="left:0px;top:493px;width:2px;height:21px;background:#a8a8a8;"></div><div style="left:17.50px;top:498.84px;font-size:12px;line-height:12px;color:#000;white-space:pre;letter-spacing:-0.984px;">EURUSD,H4</div><div style="left:100.00px;top:498.84px;font-size:12px;line-height:12px;color:#7a7a7a;white-space:pre;letter-spacing:-0.879px;">GER30,H4</div><div style="left:162px;top:500px;width:1px;height:11px;background:#555;"></div><div style="left:172.00px;top:498.84px;font-size:12px;line-height:12px;color:#7a7a7a;white-space:pre;letter-spacing:-0.632px;">XAUUSD,H4</div><svg style="left:1245px;top:499px" width="8" height="10" viewBox="0 0 8 10"><path d="M6,1 L1.5,5 L6,9Z" fill="#a0a0a0"/></svg><svg style="left:1265px;top:499px" width="8" height="10" viewBox="0 0 8 10"><path d="M2,1 L6.5,5 L2,9Z" fill="#a0a0a0"/></svg><div style="left:0px;top:519px;width:444px;height:152px;background:#f0f0f0;"></div><div style="left:15px;top:519px;width:429px;height:152px;background:#fff;border-left:1px solid #a0a0a0;border-top:1px solid #a0a0a0;"></div><div style="left:1px;top:533px;width:13px;height:161px;background:#c8d8e8;"></div><div style="left:2px;top:693px;font-size:12px;line-height:12px;letter-spacing:-0.55px;white-space:pre;color:#000;transform:rotate(-90deg);transform-origin:0 0;">Navegador</div><svg style="left:3px;top:521px" width="9" height="8" viewBox="0 0 9 8"><path d="M1,1 L7,7 M7,1 L1,7" stroke="#000" stroke-width="1.6"/></svg><div style="left:29px;top:539px;width:1px;height:132px;background-image:linear-gradient(#777 50%,transparent 50%);background-size:1px 2px;"></div><div style="left:35px;top:549px;width:6px;height:1px;background-image:linear-gradient(90deg,#777 50%,transparent 50%);background-size:2px 1px;"></div><div style="left:50px;top:557px;width:1px;height:6px;background-image:linear-gradient(#777 50%,transparent 50%);background-size:1px 2px;"></div><div style="left:55px;top:567px;width:9px;height:1px;background-image:linear-gradient(90deg,#777 50%,transparent 50%);background-size:2px 1px;"></div><div style="left:71px;top:575px;width:1px;height:10px;background-image:linear-gradient(#777 50%,transparent 50%);background-size:1px 2px;"></div><div style="left:71px;top:585px;width:14px;height:1px;background-image:linear-gradient(90deg,#777 50%,transparent 50%);background-size:2px 1px;"></div><div style="left:35px;top:603px;width:6px;height:1px;background-image:linear-gradient(90deg,#777 50%,transparent 50%);background-size:2px 1px;"></div><div style="left:35px;top:621px;width:6px;height:1px;background-image:linear-gradient(90deg,#777 50%,transparent 50%);background-size:2px 1px;"></div><div style="left:50px;top:629px;width:1px;height:28px;background-image:linear-gradient(#777 50%,transparent 50%);background-size:1px 2px;"></div><div style="left:50px;top:639px;width:12px;height:1px;background-image:linear-gradient(90deg,#777 50%,transparent 50%);background-size:2px 1px;"></div><div style="left:50px;top:657px;width:12px;height:1px;background-image:linear-gradient(90deg,#777 50%,transparent 50%);background-size:2px 1px;"></div><svg style="left:22px;top:522px" width="16" height="16" viewBox="0 0 16 16"><rect x="0.5" y="0.5" width="10" height="8" rx="0.8" fill="#e8f1fb" stroke="#5a9be0"/><path d="M2,4 l1.5,-1.5 M2,4 l1.5,1.5 M5,4 h3" stroke="#5a9be0" stroke-width="0.7"/><rect x="3.5" y="5.5" width="11" height="9" rx="0.8" fill="#fff" stroke="#5a9be0"/><path d="M5,10.5 l1.2,-2 1.5,3 1.5,-3 1.5,3 1.2,-1.5" fill="none" stroke="#5a9be0" stroke-width="0.8"/></svg><svg style="left:25px;top:545px" width="9" height="9" viewBox="0 0 9 9"><rect x="0.5" y="0.5" width="8" height="8" rx="1" fill="#f4f4f4" stroke="#9a9a9a"/><path d="M2,4.5 H7" stroke="#3a5fa8" stroke-width="1.1"/></svg><svg style="left:41px;top:538px" width="18" height="18" viewBox="0 0 18 18"><circle cx="6" cy="4.5" r="3.5" fill="#f0b73a" stroke="#b07a10" stroke-width="0.7"/><path d="M1,13.5 Q1,8 6,8 Q9,8 10,10 V15 H1Z" fill="#3fbf3f" stroke="#1c8a1c" stroke-width="0.7"/><circle cx="11" cy="5" r="3.8" fill="#e8c83a" stroke="#a48416" stroke-width="0.7"/><path d="M5,16.5 Q5,9.5 11,9.5 Q17,9.5 17,16.5Z" fill="#e3c23a" stroke="#a48416" stroke-width="0.7"/><path d="M9,10 L13,16" stroke="#fff6c8" stroke-width="1"/></svg><svg style="left:46px;top:563px" width="9" height="9" viewBox="0 0 9 9"><rect x="0.5" y="0.5" width="8" height="8" rx="1" fill="#f4f4f4" stroke="#9a9a9a"/><path d="M2,4.5 H7" stroke="#3a5fa8" stroke-width="1.1"/></svg><svg style="left:65px;top:558px" width="12" height="16" viewBox="0 0 12 16"><path d="M1,2.5 L4,0.5 H11 V13 L8,15.5 H1Z" fill="#1c7ae0"/><path d="M1,2.5 H8 V15.5" fill="none" stroke="#0b5db9" stroke-width="0.8"/><rect x="2.5" y="4" width="4" height="1.2" fill="#cfe6ff"/><rect x="2.5" y="6" width="4" height="1.2" fill="#cfe6ff"/><circle cx="5.5" cy="11" r="0.8" fill="#f5c542"/><path d="M8,2.5 L11,0.5" stroke="#8cc4ff" stroke-width="0.8"/></svg><svg style="left:86px;top:576px" width="13" height="16" viewBox="0 0 13 16"><circle cx="6" cy="5" r="4" fill="#e3c23a" stroke="#a48416" stroke-width="0.8"/><path d="M0.5,15 Q0.5,9.5 6,9.5 Q11.5,9.5 11.5,15Z" fill="#e3c23a" stroke="#a48416" stroke-width="0.8"/><path d="M4,10 L8,15" stroke="#fff6c8" stroke-width="1"/></svg><svg style="left:25px;top:599px" width="9" height="9" viewBox="0 0 9 9"><rect x="0.5" y="0.5" width="8" height="8" rx="1" fill="#f4f4f4" stroke="#9a9a9a"/><path d="M2,4.5 H7" stroke="#3a5fa8" stroke-width="1.1"/><path d="M4.5,2 V7" stroke="#3a5fa8" stroke-width="1.1"/></svg><svg style="left:42px;top:594px" width="15" height="15" viewBox="0 0 15 15"><rect x="0.5" y="0.5" width="13" height="13" rx="2" fill="#f5d855" stroke="#b9952a"/><text x="4" y="11" font-size="10" font-style="italic" font-family="Liberation Serif" fill="#7a5c10">f</text></svg><svg style="left:25px;top:617px" width="9" height="9" viewBox="0 0 9 9"><rect x="0.5" y="0.5" width="8" height="8" rx="1" fill="#f4f4f4" stroke="#9a9a9a"/><path d="M2,4.5 H7" stroke="#3a5fa8" stroke-width="1.1"/></svg><svg style="left:42px;top:612px" width="17" height="17" viewBox="0 0 17 17"><path d="M4,8 L9,15 L14,10Z" fill="#f3d64e" stroke="#a88a1a" stroke-width="0.7"/><path d="M10,12 L13,9.5 L16,12.5 L13,15Z" fill="#f3d64e" stroke="#a88a1a" stroke-width="0.7"/><ellipse cx="8" cy="6.5" rx="7.5" ry="2.5" fill="#4d9fdf" stroke="#2a6fae" stroke-width="0.7"/><ellipse cx="8" cy="4.5" rx="4" ry="3.5" fill="#6ab4ee" stroke="#2a6fae" stroke-width="0.7"/></svg><svg style="left:63px;top:630px" width="17" height="17" viewBox="0 0 17 17"><path d="M4,8 L9,15 L14,10Z" fill="#f3d64e" stroke="#a88a1a" stroke-width="0.7"/><path d="M10,12 L13,9.5 L16,12.5 L13,15Z" fill="#f3d64e" stroke="#a88a1a" stroke-width="0.7"/><ellipse cx="8" cy="6.5" rx="7.5" ry="2.5" fill="#4d9fdf" stroke="#2a6fae" stroke-width="0.7"/><ellipse cx="8" cy="4.5" rx="4" ry="3.5" fill="#6ab4ee" stroke="#2a6fae" stroke-width="0.7"/></svg><svg style="left:63px;top:648px" width="17" height="17" viewBox="0 0 17 17"><path d="M4,8 L9,15 L14,10Z" fill="#f3d64e" stroke="#a88a1a" stroke-width="0.7"/><path d="M10,12 L13,9.5 L16,12.5 L13,15Z" fill="#f3d64e" stroke="#a88a1a" stroke-width="0.7"/><ellipse cx="8" cy="6.5" rx="7.5" ry="2.5" fill="#4d9fdf" stroke="#2a6fae" stroke-width="0.7"/><ellipse cx="8" cy="4.5" rx="4" ry="3.5" fill="#6ab4ee" stroke="#2a6fae" stroke-width="0.7"/></svg><svg style="left:42px;top:664px" width="14" height="8" viewBox="0 0 14 8"><path d="M1,2 H13 L12,4 H2Z" fill="#f3d64e" stroke="#a88a1a" stroke-width="0.7"/><rect x="3" y="4" width="8" height="4" fill="#f7e9a8"/></svg><div style="left:43.50px;top:524.14px;font-size:12px;line-height:12px;color:#000;white-space:pre;letter-spacing:-0.505px;">FXCM MT4</div><div style="left:64.40px;top:542.14px;font-size:12px;line-height:12px;color:#000;white-space:pre;letter-spacing:-0.300px;">Cuentas</div><div style="left:85.70px;top:560.14px;font-size:12px;line-height:12px;color:#000;white-space:pre;letter-spacing:-0.492px;">FXCM-USDDemo02</div><div style="left:106.50px;top:578.14px;font-size:12px;line-height:12px;color:#000;white-space:pre;letter-spacing:-0.486px;">51315363: Tomas</div><div style="left:64.40px;top:596.14px;font-size:12px;line-height:12px;color:#000;white-space:pre;letter-spacing:-0.168px;">Indicadores</div><div style="left:64.40px;top:614.14px;font-size:12px;line-height:12px;color:#000;white-space:pre;letter-spacing:-0.419px;">Asesores Expertos</div><div style="left:85.70px;top:632.14px;font-size:12px;line-height:12px;color:#000;white-space:pre;letter-spacing:-0.305px;">MACD Sample</div><div style="left:85.70px;top:650.14px;font-size:12px;line-height:12px;color:#000;white-space:pre;letter-spacing:0.040px;">Moving Average</div><div style="left:64.40px;top:667.34px;font-size:12px;line-height:12px;color:#000;white-space:pre;letter-spacing:0.045px;">Scripts</div><div style="left:423px;top:519px;width:16px;height:151px;background:#f0f0f0;"></div><div style="left:424px;top:519px;width:15px;height:122px;background:#cdcdcd;"></div><svg style="left:427px;top:660px" width="9" height="6" viewBox="0 0 9 6"><path d="M1,1 L4.5,4.5 L8,1" stroke="#606060" stroke-width="1.6" fill="none"/></svg><div style="left:439px;top:519px;width:5px;height:152px;background:#f0f0f0;"></div><div style="left:14px;top:671px;width:430px;height:26px;background:#f0f0f0;"></div><div style="left:14px;top:671px;width:430px;height:1px;background:#000;"></div><div style="left:14px;top:672px;width:430px;height:1px;background:#fff;"></div><div style="left:18px;top:671px;width:60px;height:20px;background:#fff;border:1px solid #000;border-top:none;"></div><div style="left:28.50px;top:674.84px;font-size:12px;line-height:12px;color:#000;white-space:pre;letter-spacing:0.062px;">Común</div><div style="left:88.00px;top:674.84px;font-size:12px;line-height:12px;color:#7a7a7a;white-space:pre;letter-spacing:-0.151px;">Favoritos</div><div style="left:146px;top:675px;width:1px;height:13px;background:#555;"></div><div style="left:1001px;top:519px;width:279px;height:152px;background:#fff;"></div><div style="left:1001px;top:519px;width:276px;height:1px;background:#a0a0a0;"></div><div style="left:1179px;top:522px;width:1px;height:141px;background:#d8d8d8;"></div><div style="left:1202.00px;top:525.34px;font-size:12px;line-height:12px;color:#000;white-space:pre;letter-spacing:-0.472px;">Fecha</div><svg style="left:1244px;top:530px" width="8" height="7" viewBox="0 0 8 7"><path d="M0.5,0.5 H7.5 L4,6.5Z" fill="none" stroke="#777" stroke-width="0.8"/></svg><div style="left:1001px;top:563px;width:258px;height:1px;background:#e0e0e0;"></div><div style="left:1179px;top:543px;width:1px;height:20px;background:#d8d8d8;"></div><div style="left:1198.50px;top:547.64px;font-size:12px;line-height:12px;color:#000;white-space:pre;letter-spacing:-0.406px;">2020.07.17</div><div style="left:1001px;top:563px;width:258px;height:20px;background:#ebebeb;"></div><div style="left:1001px;top:583px;width:258px;height:1px;background:#e0e0e0;"></div><div style="left:1179px;top:563px;width:1px;height:20px;background:#d8d8d8;"></div><div style="left:1198.50px;top:567.64px;font-size:12px;line-height:12px;color:#000;white-space:pre;letter-spacing:-0.406px;">2020.07.15</div><div style="left:1001px;top:603px;width:258px;height:1px;background:#e0e0e0;"></div><div style="left:1179px;top:583px;width:1px;height:20px;background:#d8d8d8;"></div><div style="left:1198.50px;top:587.64px;font-size:12px;line-height:12px;color:#000;white-space:pre;letter-spacing:-0.406px;">2020.07.02</div><div style="left:1001px;top:603px;width:258px;height:20px;background:#ebebeb;"></div><div style="left:1001px;top:623px;width:258px;height:1px;background:#e0e0e0;"></div><div style="left:1179px;top:603px;width:1px;height:20px;background:#d8d8d8;"></div><div style="left:1198.50px;top:607.64px;font-size:12px;line-height:12px;color:#000;white-space:pre;letter-spacing:-0.406px;">2020.06.25</div><div style="left:1001px;top:643px;width:258px;height:1px;background:#e0e0e0;"></div><div style="left:1179px;top:623px;width:1px;height:20px;background:#d8d8d8;"></div><div style="left:1198.50px;top:627.64px;font-size:12px;line-height:12px;color:#000;white-space:pre;letter-spacing:-0.406px;">2020.06.22</div><div style="left:1001px;top:643px;width:258px;height:20px;background:#ebebeb;"></div><div style="left:1001px;top:663px;width:258px;height:1px;background:#e0e0e0;"></div><div style="left:1179px;top:643px;width:1px;height:20px;background:#d8d8d8;"></div><div style="left:1198.50px;top:647.64px;font-size:12px;line-height:12px;color:#000;white-space:pre;letter-spacing:-0.406px;">2020.06.16</div><div style="left:1001px;top:683px;width:258px;height:1px;background:#e0e0e0;"></div><div style="left:1179px;top:663px;width:1px;height:20px;background:#d8d8d8;"></div><div style="left:1198.50px;top:667.64px;font-size:12px;line-height:12px;color:#000;white-space:pre;letter-spacing:-0.406px;">2020.06.12</div><div style="left:1001px;top:563px;width:178px;height:20px;overflow:hidden;"></div><div style="left:1001px;top:583px;width:178px;height:20px;overflow:hidden;"></div><div style="left:1001px;top:603px;width:178px;height:20px;overflow:hidden;"></div><div style="left:1001px;top:623px;width:178px;height:20px;overflow:hidden;"></div><div style="left:1001px;top:643px;width:178px;height:20px;overflow:hidden;"></div><div style="left:1001px;top:663px;width:178px;height:20px;overflow:hidden;"></div><div style="left:1038.00px;top:547.64px;font-size:12px;line-height:12px;color:#000;white-space:pre;letter-spacing:-0.384px;">Sistemas comerciales, Es...</div><div style="left:1001.00px;top:567.64px;font-size:12px;line-height:12px;color:#000;white-space:pre;letter-spacing:-0.115px;">mplos, Integración</div><div style="left:1001.00px;top:587.64px;font-size:12px;line-height:12px;color:#000;white-space:pre;letter-spacing:-0.355px;">mplos, Sistemas comerciales, Es...</div><div style="left:1001.00px;top:607.64px;font-size:12px;line-height:12px;color:#000;white-space:pre;letter-spacing:-0.355px;">mplos, Sistemas comerciales, Es...</div><div style="left:1001.00px;top:627.64px;font-size:12px;line-height:12px;color:#000;white-space:pre;letter-spacing:-0.115px;">mplos, Integración</div><div style="left:1001.00px;top:647.64px;font-size:12px;line-height:12px;color:#000;white-space:pre;letter-spacing:-0.004px;">bador, Integración</div><div style="left:1001px;top:663px;width:258px;height:8px;background:#fff;"></div><div style="left:1001.00px;top:667.34px;font-size:12px;line-height:12px;color:#000;white-space:pre;letter-spacing:0.180px;">ulios, Sistemas comerciales, I...</div><div style="left:1259px;top:519px;width:17px;height:152px;background:#f0f0f0;"></div><div style="left:1260px;top:537px;width:15px;height:18px;background:#cdcdcd;"></div><svg style="left:1263px;top:526px" width="9" height="6" viewBox="0 0 9 6"><path d="M1,5 L4.5,1.5 L8,5" stroke="#606060" stroke-width="1.6" fill="none"/></svg><svg style="left:1263px;top:658px" width="9" height="6" viewBox="0 0 9 6"><path d="M1,1 L4.5,4.5 L8,1" stroke="#606060" stroke-width="1.6" fill="none"/></svg><div style="left:1276px;top:519px;width:4px;height:152px;background:#f0f0f0;"></div><div style="left:445px;top:671px;width:835px;height:26px;background:#f0f0f0;"></div><div style="left:445px;top:671px;width:682px;height:1px;background:#000;"></div><div style="left:445px;top:672px;width:682px;height:1px;background:#fff;"></div><div style="left:1193px;top:671px;width:87px;height:1px;background:#000;"></div><div style="left:1193px;top:672px;width:87px;height:1px;background:#fff;"></div><div style="left:1126px;top:671px;width:67px;height:20px;background:#fff;border:1px solid #000;border-top:none;"></div><div style="left:1001.00px;top:674.84px;font-size:12px;line-height:12px;color:#7a7a7a;white-space:pre;letter-spacing:-0.051px;">lercado</div><div style="left:1042.00px;top:681.38px;font-size:9px;line-height:9px;color:#e81010;white-space:pre;letter-spacing:-0.010px;font-weight:bold;">129</div><div style="left:1067px;top:675px;width:1px;height:13px;background:#555;"></div><div style="left:1077.00px;top:674.84px;font-size:12px;line-height:12px;color:#7a7a7a;white-space:pre;letter-spacing:-0.625px;">Señales</div><div style="left:1136.00px;top:674.84px;font-size:12px;line-height:12px;color:#000;white-space:pre;letter-spacing:0.035px;">Artículos</div><div style="left:1203.00px;top:674.84px;font-size:12px;line-height:12px;color:#7a7a7a;white-space:pre;letter-spacing:-0.486px;">Code Base</div><div style="left:1268px;top:675px;width:1px;height:13px;background:#555;"></div><div style="left:447px;top:687px;width:13px;height:8px;background:#bccadb;"></div><div style="left:450px;top:688px;width:8px;height:1px;background:#3a1020;"></div><div style="left:450px;top:688px;width:1px;height:3px;background:#3a1020;"></div><div style="left:461px;top:688px;width:1px;height:7px;background:#999;"></div><div style="left:0px;top:696px;width:1280px;height:1px;background:#a0a0a0;"></div><div style="left:0px;top:697px;width:1280px;height:21px;background:#f0f0f0;"></div><div style="left:2.00px;top:703.64px;font-size:12px;line-height:12px;color:#000;white-space:pre;letter-spacing:-0.325px;">Para obtener ayuda, pulse F1</div><div style="left:586px;top:700px;width:1px;height:18px;background:#c8c8c8;"></div><div style="left:702px;top:700px;width:1px;height:18px;background:#c8c8c8;"></div><div style="left:804px;top:700px;width:1px;height:18px;background:#c8c8c8;"></div><div style="left:875px;top:700px;width:1px;height:18px;background:#c8c8c8;"></div><div style="left:946px;top:700px;width:1px;height:18px;background:#c8c8c8;"></div><div style="left:1014px;top:700px;width:1px;height:18px;background:#c8c8c8;"></div><div style="left:1084px;top:700px;width:1px;height:18px;background:#c8c8c8;"></div><div style="left:1150px;top:700px;width:1px;height:18px;background:#c8c8c8;"></div><div style="left:592.00px;top:703.64px;font-size:12px;line-height:12px;color:#000;white-space:pre;letter-spacing:-0.004px;">Default</div><svg style="left:1156px;top:703px" width="24" height="13" viewBox="0 0 24 13"><rect x="0.00" y="0" width="2.2" height="9.5" fill="#507a0a"/><rect x="0.00" y="9.5" width="2.2" height="3.5" fill="#8e0a0a"/><rect x="3.35" y="0" width="2.2" height="8.4" fill="#507a0a"/><rect x="3.35" y="8.4" width="2.2" height="4.6" fill="#8e0a0a"/><rect x="6.70" y="0" width="2.2" height="7.3" fill="#507a0a"/><rect x="6.70" y="7.3" width="2.2" height="5.7" fill="#8e0a0a"/><rect x="10.05" y="0" width="2.2" height="6.2" fill="#507a0a"/><rect x="10.05" y="6.2" width="2.2" height="6.8" fill="#8e0a0a"/><rect x="13.40" y="0" width="2.2" height="5.1" fill="#507a0a"/><rect x="13.40" y="5.1" width="2.2" height="7.9" fill="#8e0a0a"/><rect x="16.75" y="0" width="2.2" height="4.0" fill="#507a0a"/><rect x="16.75" y="4.0" width="2.2" height="9.0" fill="#8e0a0a"/><rect x="20.10" y="0" width="2.2" height="2.9" fill="#507a0a"/><rect x="20.10" y="2.9" width="2.2" height="10.1" fill="#8e0a0a"/></svg><div style="left:1183.00px;top:703.64px;font-size:12px;line-height:12px;color:#000;white-space:pre;letter-spacing:-0.054px;">68/0 kb</div><div style="left:0px;top:718px;width:1280px;height:2px;background:#3a3a3a;"></div><div style="left:243px;top:98px;width:795px;height:477px;background:#f0f0f0;border:1px solid #a8a8a8;box-shadow:2px 3px 10px rgba(0,0,0,0.22);"></div><div style="left:244px;top:99px;width:793px;height:29px;background:#fff;"></div><div style="left:251.00px;top:106.84px;font-size:12px;line-height:12px;color:#8c8c8c;white-space:pre;letter-spacing:-0.356px;">Centro de historiales: EURUSD,M1</div><div style="left:966.00px;top:106.84px;font-size:12px;line-height:12px;color:#999;white-space:pre;">?</div><svg style="left:1010px;top:107px" width="11" height="11" viewBox="0 0 11 11"><path d="M0.5,0.5 L10.5,10.5 M10.5,0.5 L0.5,10.5" stroke="#777" stroke-width="1"/></svg><div style="left:251.00px;top:145.59px;font-size:11px;line-height:11px;color:#000;white-space:pre;letter-spacing:-0.547px;">Símbolos:</div><div style="left:452.60px;top:145.29px;font-size:11px;line-height:11px;color:#000;white-space:pre;letter-spacing:-0.064px;">Base de datos: 2067 entradas</div><div style="left:251px;top:161px;width:195px;height:374px;background:#fff;border:1px solid #828790;"></div><div style="left:265px;top:180px;width:1px;height:354px;background-image:linear-gradient(#808080 50%,transparent 50%);background-size:1px 2px;"></div><div style="left:270px;top:190px;width:7px;height:1px;background-image:linear-gradient(90deg,#808080 50%,transparent 50%);background-size:2px 1px;"></div><div style="left:286px;top:198px;width:1px;height:226px;background-image:linear-gradient(#808080 50%,transparent 50%);background-size:1px 2px;"></div><div style="left:291px;top:208px;width:7px;height:1px;background-image:linear-gradient(90deg,#808080 50%,transparent 50%);background-size:2px 1px;"></div><div style="left:307px;top:216px;width:1px;height:154px;background-image:linear-gradient(#808080 50%,transparent 50%);background-size:1px 2px;"></div><div style="left:307px;top:226px;width:12px;height:1px;background-image:linear-gradient(90deg,#808080 50%,transparent 50%);background-size:2px 1px;"></div><div style="left:307px;top:244px;width:12px;height:1px;background-image:linear-gradient(90deg,#808080 50%,transparent 50%);background-size:2px 1px;"></div><div style="left:307px;top:262px;width:12px;height:1px;background-image:linear-gradient(90deg,#808080 50%,transparent 50%);background-size:2px 1px;"></div><div style="left:307px;top:280px;width:12px;height:1px;background-image:linear-gradient(90deg,#808080 50%,transparent 50%);background-size:2px 1px;"></div><div style="left:307px;top:298px;width:12px;height:1px;background-image:linear-gradient(90deg,#808080 50%,transparent 50%);background-size:2px 1px;"></div><div style="left:307px;top:316px;width:12px;height:1px;background-image:linear-gradient(90deg,#808080 50%,transparent 50%);background-size:2px 1px;"></div><div style="left:307px;top:334px;width:12px;height:1px;background-image:linear-gradient(90deg,#808080 50%,transparent 50%);background-size:2px 1px;"></div><div style="left:307px;top:352px;width:12px;height:1px;background-image:linear-gradient(90deg,#808080 50%,transparent 50%);background-size:2px 1px;"></div><div style="left:307px;top:370px;width:12px;height:1px;background-image:linear-gradient(90deg,#808080 50%,transparent 50%);background-size:2px 1px;"></div><div style="left:286px;top:388px;width:12px;height:1px;background-image:linear-gradient(90deg,#808080 50%,transparent 50%);background-size:2px 1px;"></div><div style="left:286px;top:406px;width:12px;height:1px;background-image:linear-gradient(90deg,#808080 50%,transparent 50%);background-size:2px 1px;"></div><div style="left:286px;top:424px;width:12px;height:1px;background-image:linear-gradient(90deg,#808080 50%,transparent 50%);background-size:2px 1px;"></div><div style="left:270px;top:442px;width:7px;height:1px;background-image:linear-gradient(90deg,#808080 50%,transparent 50%);background-size:2px 1px;"></div><div style="left:270px;top:460px;width:7px;height:1px;background-image:linear-gradient(90deg,#808080 50%,transparent 50%);background-size:2px 1px;"></div><div style="left:270px;top:478px;width:7px;height:1px;background-image:linear-gradient(90deg,#808080 50%,transparent 50%);background-size:2px 1px;"></div><div style="left:270px;top:496px;width:7px;height:1px;background-image:linear-gradient(90deg,#808080 50%,transparent 50%);background-size:2px 1px;"></div><div style="left:270px;top:514px;width:7px;height:1px;background-image:linear-gradient(90deg,#808080 50%,transparent 50%);background-size:2px 1px;"></div><div style="left:270px;top:532px;width:7px;height:1px;background-image:linear-gradient(90deg,#808080 50%,transparent 50%);background-size:2px 1px;"></div><svg style="left:258px;top:164px" width="16" height="16" viewBox="0 0 16 16"><rect x="0.5" y="0.5" width="10" height="8" rx="0.8" fill="#e8f1fb" stroke="#5a9be0"/><path d="M2,4 l1.5,-1.5 M2,4 l1.5,1.5 M5,4 h3" stroke="#5a9be0" stroke-width="0.7"/><rect x="3.5" y="5.5" width="11" height="9" rx="0.8" fill="#fff" stroke="#5a9be0"/><path d="M5,10.5 l1.2,-2 1.5,3 1.5,-3 1.5,3 1.2,-1.5" fill="none" stroke="#5a9be0" stroke-width="0.8"/></svg><svg style="left:261px;top:186px" width="9" height="9" viewBox="0 0 9 9"><rect x="0.5" y="0.5" width="8" height="8" rx="1" fill="#f4f4f4" stroke="#9a9a9a"/><path d="M2,4.5 H7" stroke="#3a5fa8" stroke-width="1.1"/></svg><svg style="left:277px;top:181px" width="18" height="18" viewBox="0 0 18 18"><rect x="3.5" y="0.5" width="9" height="8" rx="2" fill="#f3da6a" stroke="#b9952a" stroke-width="0.8"/><rect x="7.5" y="3.5" width="9" height="10" rx="2" fill="#52b0ec" stroke="#2a78c0" stroke-width="0.8"/><rect x="0.5" y="6.5" width="10" height="10" rx="2" fill="#33c433" stroke="#178a17" stroke-width="0.8"/><text x="3" y="14.5" font-size="8.5" font-family="Liberation Sans" fill="#0b5a0b">$</text></svg><svg style="left:282px;top:204px" width="9" height="9" viewBox="0 0 9 9"><rect x="0.5" y="0.5" width="8" height="8" rx="1" fill="#f4f4f4" stroke="#9a9a9a"/><path d="M2,4.5 H7" stroke="#3a5fa8" stroke-width="1.1"/></svg><svg style="left:299px;top:199px" width="16" height="16" viewBox="0 0 16 16"><rect x="0.5" y="0.5" width="14" height="14" rx="2.5" fill="#f5c842" stroke="#c79a22"/><text x="4" y="12" font-size="11" font-family="Liberation Sans" fill="#9a6c00">$</text></svg><div style="left:340px;top:236px;width:75px;height:17px;background:#e6e6e6;"></div><svg style="left:319px;top:216px" width="17" height="17" viewBox="0 0 17 17"><rect x="1.4" y="1.4" width="10.5" height="10.5" rx="2" fill="#3cc43c" stroke="#239a23" stroke-width="0.8"/><path d="M1.4,6.65 V3.4 Q1.4,1.4 3.4,1.4 H9.9 Q11.9,1.4 11.9,3.4 V6.65Z" fill="#e6c21e" stroke="#a88a10" stroke-width="0.8"/><path d="M2.9,3.2 H10.4" stroke="#f8e88a" stroke-width="1"/><path d="M2.9,7.8500000000000005 H10.4" stroke="#aaf0aa" stroke-width="0.9"/><rect x="5.4" y="4.4" width="10.5" height="11.5" rx="2" fill="#3cc43c" stroke="#239a23" stroke-width="0.8"/><path d="M5.4,10.15 V6.4 Q5.4,4.4 7.4,4.4 H13.9 Q15.9,4.4 15.9,6.4 V10.15Z" fill="#e6c21e" stroke="#a88a10" stroke-width="0.8"/><path d="M6.9,6.2 H14.4" stroke="#f8e88a" stroke-width="1"/><path d="M6.9,11.35 H14.4" stroke="#aaf0aa" stroke-width="0.9"/></svg><div style="left:342.50px;top:220.69px;font-size:11px;line-height:11px;color:#000;white-space:pre;letter-spacing:-0.243px;">1 minuto (M1)</div><svg style="left:319px;top:234px" width="17" height="17" viewBox="0 0 17 17"><rect x="1.4" y="1.4" width="10.5" height="10.5" rx="2" fill="#c9c9c9" stroke="#9c9c9c" stroke-width="0.8"/><path d="M2.9,3.4 H10.4 M2.9,7.65 H10.4" stroke="#f4f4f4" stroke-width="1"/><rect x="5.4" y="4.4" width="10.5" height="11.5" rx="2" fill="#c9c9c9" stroke="#9c9c9c" stroke-width="0.8"/><path d="M6.9,6.4 H14.4 M6.9,11.15 H14.4" stroke="#f4f4f4" stroke-width="1"/></svg><div style="left:342.50px;top:238.69px;font-size:11px;line-height:11px;color:#000;white-space:pre;letter-spacing:-0.283px;">5 minutos (M5)</div><svg style="left:319px;top:252px" width="17" height="17" viewBox="0 0 17 17"><rect x="1.4" y="1.4" width="10.5" height="10.5" rx="2" fill="#c9c9c9" stroke="#9c9c9c" stroke-width="0.8"/><path d="M2.9,3.4 H10.4 M2.9,7.65 H10.4" stroke="#f4f4f4" stroke-width="1"/><rect x="5.4" y="4.4" width="10.5" height="11.5" rx="2" fill="#c9c9c9" stroke="#9c9c9c" stroke-width="0.8"/><path d="M6.9,6.4 H14.4 M6.9,11.15 H14.4" stroke="#f4f4f4" stroke-width="1"/></svg><div style="left:342.50px;top:256.69px;font-size:11px;line-height:11px;color:#000;white-space:pre;letter-spacing:-0.266px;">15 minutos (M5)</div><svg style="left:319px;top:270px" width="17" height="17" viewBox="0 0 17 17"><rect x="1.4" y="1.4" width="10.5" height="10.5" rx="2" fill="#c9c9c9" stroke="#9c9c9c" stroke-width="0.8"/><path d="M2.9,3.4 H10.4 M2.9,7.65 H10.4" stroke="#f4f4f4" stroke-width="1"/><rect x="5.4" y="4.4" width="10.5" height="11.5" rx="2" fill="#c9c9c9" stroke="#9c9c9c" stroke-width="0.8"/><path d="M6.9,6.4 H14.4 M6.9,11.15 H14.4" stroke="#f4f4f4" stroke-width="1"/></svg><div style="left:342.50px;top:274.69px;font-size:11px;line-height:11px;color:#000;white-space:pre;letter-spacing:-0.231px;">30 minutos (M30)</div><svg style="left:319px;top:288px" width="17" height="17" viewBox="0 0 17 17"><rect x="1.4" y="1.4" width="10.5" height="10.5" rx="2" fill="#c9c9c9" stroke="#9c9c9c" stroke-width="0.8"/><path d="M2.9,3.4 H10.4 M2.9,7.65 H10.4" stroke="#f4f4f4" stroke-width="1"/><rect x="5.4" y="4.4" width="10.5" height="11.5" rx="2" fill="#c9c9c9" stroke="#9c9c9c" stroke-width="0.8"/><path d="M6.9,6.4 H14.4 M6.9,11.15 H14.4" stroke="#f4f4f4" stroke-width="1"/></svg><div style="left:342.50px;top:292.69px;font-size:11px;line-height:11px;color:#000;white-space:pre;letter-spacing:-0.149px;">1 hora (H1)</div><svg style="left:319px;top:306px" width="17" height="17" viewBox="0 0 17 17"><rect x="1.4" y="1.4" width="10.5" height="10.5" rx="2" fill="#3cc43c" stroke="#239a23" stroke-width="0.8"/><path d="M1.4,6.65 V3.4 Q1.4,1.4 3.4,1.4 H9.9 Q11.9,1.4 11.9,3.4 V6.65Z" fill="#e6c21e" stroke="#a88a10" stroke-width="0.8"/><path d="M2.9,3.2 H10.4" stroke="#f8e88a" stroke-width="1"/><path d="M2.9,7.8500000000000005 H10.4" stroke="#aaf0aa" stroke-width="0.9"/><rect x="5.4" y="4.4" width="10.5" height="11.5" rx="2" fill="#3cc43c" stroke="#239a23" stroke-width="0.8"/><path d="M5.4,10.15 V6.4 Q5.4,4.4 7.4,4.4 H13.9 Q15.9,4.4 15.9,6.4 V10.15Z" fill="#e6c21e" stroke="#a88a10" stroke-width="0.8"/><path d="M6.9,6.2 H14.4" stroke="#f8e88a" stroke-width="1"/><path d="M6.9,11.35 H14.4" stroke="#aaf0aa" stroke-width="0.9"/></svg><div style="left:342.50px;top:310.69px;font-size:11px;line-height:11px;color:#000;white-space:pre;letter-spacing:-0.120px;">4 horas (H4)</div><svg style="left:319px;top:324px" width="17" height="17" viewBox="0 0 17 17"><rect x="1.4" y="1.4" width="10.5" height="10.5" rx="2" fill="#c9c9c9" stroke="#9c9c9c" stroke-width="0.8"/><path d="M2.9,3.4 H10.4 M2.9,7.65 H10.4" stroke="#f4f4f4" stroke-width="1"/><rect x="5.4" y="4.4" width="10.5" height="11.5" rx="2" fill="#c9c9c9" stroke="#9c9c9c" stroke-width="0.8"/><path d="M6.9,6.4 H14.4 M6.9,11.15 H14.4" stroke="#f4f4f4" stroke-width="1"/></svg><div style="left:342.50px;top:328.69px;font-size:11px;line-height:11px;color:#000;white-space:pre;letter-spacing:-0.495px;">Día (D1)</div><svg style="left:319px;top:342px" width="17" height="17" viewBox="0 0 17 17"><rect x="1.4" y="1.4" width="10.5" height="10.5" rx="2" fill="#c9c9c9" stroke="#9c9c9c" stroke-width="0.8"/><path d="M2.9,3.4 H10.4 M2.9,7.65 H10.4" stroke="#f4f4f4" stroke-width="1"/><rect x="5.4" y="4.4" width="10.5" height="11.5" rx="2" fill="#c9c9c9" stroke="#9c9c9c" stroke-width="0.8"/><path d="M6.9,6.4 H14.4 M6.9,11.15 H14.4" stroke="#f4f4f4" stroke-width="1"/></svg><div style="left:342.50px;top:346.69px;font-size:11px;line-height:11px;color:#000;white-space:pre;letter-spacing:-0.335px;">Semana (W)</div><svg style="left:319px;top:360px" width="17" height="17" viewBox="0 0 17 17"><rect x="1.4" y="1.4" width="10.5" height="10.5" rx="2" fill="#c9c9c9" stroke="#9c9c9c" stroke-width="0.8"/><path d="M2.9,3.4 H10.4 M2.9,7.65 H10.4" stroke="#f4f4f4" stroke-width="1"/><rect x="5.4" y="4.4" width="10.5" height="11.5" rx="2" fill="#c9c9c9" stroke="#9c9c9c" stroke-width="0.8"/><path d="M6.9,6.4 H14.4 M6.9,11.15 H14.4" stroke="#f4f4f4" stroke-width="1"/></svg><div style="left:342.50px;top:364.69px;font-size:11px;line-height:11px;color:#000;white-space:pre;letter-spacing:-0.214px;">Mensualmente (MN)</div><div style="left:278.00px;top:166.69px;font-size:11px;line-height:11px;color:#000;white-space:pre;letter-spacing:-0.654px;">FXCM MT4</div><div style="left:299.40px;top:184.69px;font-size:11px;line-height:11px;color:#000;white-space:pre;letter-spacing:-0.125px;">Forex</div><div style="left:320.30px;top:202.69px;font-size:11px;line-height:11px;color:#000;white-space:pre;letter-spacing:-1.076px;">EURUSD</div><svg style="left:299px;top:380px" width="16" height="16" viewBox="0 0 16 16"><rect x="0.5" y="0.5" width="14" height="14" rx="2.5" fill="#f5c842" stroke="#c79a22"/><text x="4" y="12" font-size="11" font-family="Liberation Sans" fill="#9a6c00">$</text></svg><div style="left:320.40px;top:382.69px;font-size:11px;line-height:11px;color:#000;white-space:pre;letter-spacing:-1.211px;">GBPUSD</div><svg style="left:299px;top:398px" width="16" height="16" viewBox="0 0 16 16"><rect x="0.5" y="0.5" width="14" height="14" rx="2.5" fill="#f5c842" stroke="#c79a22"/><text x="4" y="12" font-size="11" font-family="Liberation Sans" fill="#9a6c00">$</text></svg><div style="left:320.40px;top:400.69px;font-size:11px;line-height:11px;color:#000;white-space:pre;letter-spacing:-0.907px;">USDCHF</div><svg style="left:299px;top:416px" width="16" height="16" viewBox="0 0 16 16"><rect x="0.5" y="0.5" width="14" height="14" rx="2.5" fill="#f5c842" stroke="#c79a22"/><text x="4" y="12" font-size="11" font-family="Liberation Sans" fill="#9a6c00">$</text></svg><div style="left:320.40px;top:418.69px;font-size:11px;line-height:11px;color:#000;white-space:pre;letter-spacing:-0.968px;">USDJPY</div><svg style="left:261px;top:438px" width="9" height="9" viewBox="0 0 9 9"><rect x="0.5" y="0.5" width="8" height="8" rx="1" fill="#f4f4f4" stroke="#9a9a9a"/><path d="M2,4.5 H7" stroke="#3a5fa8" stroke-width="1.1"/><path d="M4.5,2 V7" stroke="#3a5fa8" stroke-width="1.1"/></svg><svg style="left:277px;top:433px" width="18" height="18" viewBox="0 0 18 18"><rect x="3.5" y="0.5" width="9" height="8" rx="2" fill="#f3da6a" stroke="#b9952a" stroke-width="0.8"/><rect x="7.5" y="3.5" width="9" height="10" rx="2" fill="#52b0ec" stroke="#2a78c0" stroke-width="0.8"/><rect x="0.5" y="6.5" width="10" height="10" rx="2" fill="#33c433" stroke="#178a17" stroke-width="0.8"/><text x="3" y="14.5" font-size="8.5" font-family="Liberation Sans" fill="#0b5a0b">$</text></svg><div style="left:299.20px;top:436.69px;font-size:11px;line-height:11px;color:#000;white-space:pre;letter-spacing:0.042px;">Forex8</div><svg style="left:261px;top:456px" width="9" height="9" viewBox="0 0 9 9"><rect x="0.5" y="0.5" width="8" height="8" rx="1" fill="#f4f4f4" stroke="#9a9a9a"/><path d="M2,4.5 H7" stroke="#3a5fa8" stroke-width="1.1"/><path d="M4.5,2 V7" stroke="#3a5fa8" stroke-width="1.1"/></svg><svg style="left:277px;top:451px" width="18" height="18" viewBox="0 0 18 18"><rect x="3.5" y="0.5" width="9" height="8" rx="2" fill="#f3da6a" stroke="#b9952a" stroke-width="0.8"/><rect x="7.5" y="3.5" width="9" height="10" rx="2" fill="#52b0ec" stroke="#2a78c0" stroke-width="0.8"/><rect x="0.5" y="6.5" width="10" height="10" rx="2" fill="#33c433" stroke="#178a17" stroke-width="0.8"/><text x="3" y="14.5" font-size="8.5" font-family="Liberation Sans" fill="#0b5a0b">$</text></svg><div style="left:299.20px;top:454.69px;font-size:11px;line-height:11px;color:#000;white-space:pre;letter-spacing:0.042px;">Forex9</div><svg style="left:261px;top:474px" width="9" height="9" viewBox="0 0 9 9"><rect x="0.5" y="0.5" width="8" height="8" rx="1" fill="#f4f4f4" stroke="#9a9a9a"/><path d="M2,4.5 H7" stroke="#3a5fa8" stroke-width="1.1"/><path d="M4.5,2 V7" stroke="#3a5fa8" stroke-width="1.1"/></svg><svg style="left:277px;top:469px" width="18" height="18" viewBox="0 0 18 18"><rect x="3.5" y="0.5" width="9" height="8" rx="2" fill="#f3da6a" stroke="#b9952a" stroke-width="0.8"/><rect x="7.5" y="3.5" width="9" height="10" rx="2" fill="#52b0ec" stroke="#2a78c0" stroke-width="0.8"/><rect x="0.5" y="6.5" width="10" height="10" rx="2" fill="#33c433" stroke="#178a17" stroke-width="0.8"/><text x="3" y="14.5" font-size="8.5" font-family="Liberation Sans" fill="#0b5a0b">$</text></svg><div style="left:299.20px;top:472.69px;font-size:11px;line-height:11px;color:#000;white-space:pre;letter-spacing:0.042px;">Forex2</div><svg style="left:261px;top:492px" width="9" height="9" viewBox="0 0 9 9"><rect x="0.5" y="0.5" width="8" height="8" rx="1" fill="#f4f4f4" stroke="#9a9a9a"/><path d="M2,4.5 H7" stroke="#3a5fa8" stroke-width="1.1"/><path d="M4.5,2 V7" stroke="#3a5fa8" stroke-width="1.1"/></svg><svg style="left:277px;top:487px" width="18" height="18" viewBox="0 0 18 18"><rect x="3.5" y="0.5" width="9" height="8" rx="2" fill="#f3da6a" stroke="#b9952a" stroke-width="0.8"/><rect x="7.5" y="3.5" width="9" height="10" rx="2" fill="#52b0ec" stroke="#2a78c0" stroke-width="0.8"/><rect x="0.5" y="6.5" width="10" height="10" rx="2" fill="#33c433" stroke="#178a17" stroke-width="0.8"/><text x="3" y="14.5" font-size="8.5" font-family="Liberation Sans" fill="#0b5a0b">$</text></svg><div style="left:299.20px;top:490.69px;font-size:11px;line-height:11px;color:#000;white-space:pre;letter-spacing:0.042px;">Forex3</div><svg style="left:261px;top:510px" width="9" height="9" viewBox="0 0 9 9"><rect x="0.5" y="0.5" width="8" height="8" rx="1" fill="#f4f4f4" stroke="#9a9a9a"/><path d="M2,4.5 H7" stroke="#3a5fa8" stroke-width="1.1"/><path d="M4.5,2 V7" stroke="#3a5fa8" stroke-width="1.1"/></svg><svg style="left:277px;top:505px" width="18" height="18" viewBox="0 0 18 18"><rect x="3.5" y="0.5" width="9" height="8" rx="2" fill="#f3da6a" stroke="#b9952a" stroke-width="0.8"/><rect x="7.5" y="3.5" width="9" height="10" rx="2" fill="#52b0ec" stroke="#2a78c0" stroke-width="0.8"/><rect x="0.5" y="6.5" width="10" height="10" rx="2" fill="#33c433" stroke="#178a17" stroke-width="0.8"/><text x="3" y="14.5" font-size="8.5" font-family="Liberation Sans" fill="#0b5a0b">$</text></svg><div style="left:299.20px;top:508.69px;font-size:11px;line-height:11px;color:#000;white-space:pre;letter-spacing:0.042px;">Forex4</div><svg style="left:261px;top:528px" width="9" height="9" viewBox="0 0 9 9"><rect x="0.5" y="0.5" width="8" height="8" rx="1" fill="#f4f4f4" stroke="#9a9a9a"/><path d="M2,4.5 H7" stroke="#3a5fa8" stroke-width="1.1"/><path d="M4.5,2 V7" stroke="#3a5fa8" stroke-width="1.1"/></svg><svg style="left:277px;top:523px" width="18" height="18" viewBox="0 0 18 18"><rect x="3.5" y="0.5" width="9" height="8" rx="2" fill="#f3da6a" stroke="#b9952a" stroke-width="0.8"/><rect x="7.5" y="3.5" width="9" height="10" rx="2" fill="#52b0ec" stroke="#2a78c0" stroke-width="0.8"/><rect x="0.5" y="6.5" width="10" height="10" rx="2" fill="#33c433" stroke="#178a17" stroke-width="0.8"/><text x="3" y="14.5" font-size="8.5" font-family="Liberation Sans" fill="#0b5a0b">$</text></svg><div style="left:299.20px;top:526.69px;font-size:11px;line-height:11px;color:#000;white-space:pre;letter-spacing:0.428px;">Crypto 3</div><div style="left:252px;top:534px;width:193px;height:1px;background:#828790;"></div><div style="left:244px;top:535px;width:200px;height:8px;background:#f0f0f0;"></div><div style="left:428px;top:162px;width:15px;height:372px;background:#f0f0f0;"></div><div style="left:428px;top:180px;width:15px;height:172px;background:#cdcdcd;"></div><svg style="left:431px;top:171px" width="9" height="6" viewBox="0 0 9 6"><path d="M1,5 L4.5,1.5 L8,5" stroke="#606060" stroke-width="1.6" fill="none"/></svg><svg style="left:431px;top:520px" width="9" height="6" viewBox="0 0 9 6"><path d="M1,1 L4.5,4.5 L8,1" stroke="#606060" stroke-width="1.6" fill="none"/></svg><div style="left:252px;top:543px;width:193px;height:22px;background:#e1e1e1;border:1px solid #adadad;"></div><div style="left:323.50px;top:548.69px;font-size:11px;line-height:11px;color:#000;white-space:pre;letter-spacing:-0.306px;">Descargar</div><div style="left:323.5px;top:559.5px;width:8px;height:1px;background:#000;"></div><div style="left:453px;top:161px;width:578px;height:374px;background:#fff;border:1px solid #828790;"></div><div style="left:461.25px;top:169.59px;font-size:11px;line-height:11px;color:#000;white-space:pre;letter-spacing:-0.214px;">Tiempo</div><div style="left:628.00px;top:169.59px;font-size:11px;line-height:11px;color:#000;white-space:pre;letter-spacing:-0.025px;">Apertura</div><div style="left:717.00px;top:169.59px;font-size:11px;line-height:11px;color:#000;white-space:pre;letter-spacing:-0.419px;">Máximo</div><div style="left:802.00px;top:169.59px;font-size:11px;line-height:11px;color:#000;white-space:pre;letter-spacing:-0.344px;">Mínimo</div><div style="left:890.70px;top:169.59px;font-size:11px;line-height:11px;color:#000;white-space:pre;letter-spacing:-0.159px;">Cierre</div><div style="left:963.00px;top:169.59px;font-size:11px;line-height:11px;color:#000;white-space:pre;letter-spacing:-0.116px;">Volumen</div><div style="left:593px;top:163px;width:1px;height:24px;background:#e5e5e5;"></div><div style="left:676px;top:163px;width:1px;height:24px;background:#e5e5e5;"></div><div style="left:759px;top:163px;width:1px;height:24px;background:#e5e5e5;"></div><div style="left:842px;top:163px;width:1px;height:24px;background:#e5e5e5;"></div><div style="left:925px;top:163px;width:1px;height:24px;background:#e5e5e5;"></div><div style="left:454px;top:187px;width:557px;height:1px;background:#d0d0d0;"></div><div style="left:454px;top:188px;width:557px;height:19px;background:#ebebeb;"></div><div style="left:454px;top:207px;width:557px;height:1px;background:#d4d4d4;"></div><div style="left:592px;top:188px;width:1px;height:19px;background:#d4d4d4;"></div><div style="left:675px;top:188px;width:1px;height:19px;background:#d4d4d4;"></div><div style="left:758px;top:188px;width:1px;height:19px;background:#d4d4d4;"></div><div style="left:841px;top:188px;width:1px;height:19px;background:#d4d4d4;"></div><div style="left:924px;top:188px;width:1px;height:19px;background:#d4d4d4;"></div><svg style="left:461px;top:190px" width="9" height="15" viewBox="0 0 9 15"><path d="M4.5,0 V14" stroke="#15527f" stroke-width="1.1"/><rect x="1.5" y="3" width="6" height="8.5" rx="1" fill="#fff" stroke="#15527f" stroke-width="1.1"/></svg><div style="left:477.00px;top:191.69px;font-size:11px;line-height:11px;color:#000;white-space:pre;letter-spacing:0.060px;">2020.07.23 16:13</div><div style="left:632.50px;top:191.69px;font-size:11px;line-height:11px;color:#000;white-space:pre;letter-spacing:-0.038px;">1.15579</div><div style="left:716.10px;top:191.69px;font-size:11px;line-height:11px;color:#000;white-space:pre;letter-spacing:-0.038px;">1.15582</div><div style="left:798.90px;top:191.69px;font-size:11px;line-height:11px;color:#000;white-space:pre;letter-spacing:-0.038px;">1.15568</div><div style="left:882.40px;top:191.69px;font-size:11px;line-height:11px;color:#000;white-space:pre;letter-spacing:-0.038px;">1.15582</div><div style="left:995.90px;top:191.69px;font-size:11px;line-height:11px;color:#000;white-space:pre;letter-spacing:0.175px;">65</div><div style="left:454px;top:227px;width:557px;height:1px;background:#d4d4d4;"></div><div style="left:592px;top:208px;width:1px;height:19px;background:#d4d4d4;"></div><div style="left:675px;top:208px;width:1px;height:19px;background:#d4d4d4;"></div><div style="left:758px;top:208px;width:1px;height:19px;background:#d4d4d4;"></div><div style="left:841px;top:208px;width:1px;height:19px;background:#d4d4d4;"></div><div style="left:924px;top:208px;width:1px;height:19px;background:#d4d4d4;"></div><svg style="left:461px;top:210px" width="9" height="15" viewBox="0 0 9 15"><path d="M4.5,0 V14" stroke="#15527f" stroke-width="1.1"/><rect x="1.5" y="3" width="6" height="8.5" rx="1" fill="#fff" stroke="#15527f" stroke-width="1.1"/></svg><div style="left:477.00px;top:211.69px;font-size:11px;line-height:11px;color:#000;white-space:pre;letter-spacing:0.060px;">2020.07.23 16:12</div><div style="left:632.50px;top:211.69px;font-size:11px;line-height:11px;color:#000;white-space:pre;letter-spacing:-0.038px;">1.15542</div><div style="left:716.10px;top:211.69px;font-size:11px;line-height:11px;color:#000;white-space:pre;letter-spacing:-0.038px;">1.15583</div><div style="left:798.90px;top:211.69px;font-size:11px;line-height:11px;color:#000;white-space:pre;letter-spacing:-0.038px;">1.15541</div><div style="left:882.40px;top:211.69px;font-size:11px;line-height:11px;color:#000;white-space:pre;letter-spacing:-0.038px;">1.15579</div><div style="left:989.60px;top:211.69px;font-size:11px;line-height:11px;color:#000;white-space:pre;letter-spacing:0.180px;">191</div><div style="left:454px;top:228px;width:557px;height:19px;background:#ebebeb;"></div><div style="left:454px;top:247px;width:557px;height:1px;background:#d4d4d4;"></div><div style="left:592px;top:228px;width:1px;height:19px;background:#d4d4d4;"></div><div style="left:675px;top:228px;width:1px;height:19px;background:#d4d4d4;"></div><div style="left:758px;top:228px;width:1px;height:19px;background:#d4d4d4;"></div><div style="left:841px;top:228px;width:1px;height:19px;background:#d4d4d4;"></div><div style="left:924px;top:228px;width:1px;height:19px;background:#d4d4d4;"></div><svg style="left:461px;top:230px" width="9" height="15" viewBox="0 0 9 15"><path d="M4.5,0 V14" stroke="#15527f" stroke-width="1.1"/><rect x="1.5" y="3" width="6" height="8.5" rx="1" fill="#fff" stroke="#15527f" stroke-width="1.1"/></svg><div style="left:477.00px;top:231.69px;font-size:11px;line-height:11px;color:#000;white-space:pre;letter-spacing:0.111px;">2020.07.23 16:11</div><div style="left:632.50px;top:231.69px;font-size:11px;line-height:11px;color:#000;white-space:pre;letter-spacing:-0.038px;">1.15532</div><div style="left:716.10px;top:231.69px;font-size:11px;line-height:11px;color:#000;white-space:pre;letter-spacing:-0.038px;">1.15543</div><div style="left:798.90px;top:231.69px;font-size:11px;line-height:11px;color:#000;white-space:pre;letter-spacing:-0.038px;">1.15528</div><div style="left:882.40px;top:231.69px;font-size:11px;line-height:11px;color:#000;white-space:pre;letter-spacing:-0.038px;">1.15542</div><div style="left:989.60px;top:231.69px;font-size:11px;line-height:11px;color:#000;white-space:pre;letter-spacing:0.180px;">104</div><div style="left:454px;top:267px;width:557px;height:1px;background:#d4d4d4;"></div><div style="left:592px;top:248px;width:1px;height:19px;background:#d4d4d4;"></div><div style="left:675px;top:248px;width:1px;height:19px;background:#d4d4d4;"></div><div style="left:758px;top:248px;width:1px;height:19px;background:#d4d4d4;"></div><div style="left:841px;top:248px;width:1px;height:19px;background:#d4d4d4;"></div><div style="left:924px;top:248px;width:1px;height:19px;background:#d4d4d4;"></div><svg style="left:461px;top:250px" width="9" height="15" viewBox="0 0 9 15"><path d="M4.5,0 V14" stroke="#15527f" stroke-width="1.1"/><rect x="1.5" y="3" width="6" height="8.5" rx="1" fill="#3a8fd6" stroke="#15527f" stroke-width="1.1"/></svg><div style="left:477.00px;top:251.69px;font-size:11px;line-height:11px;color:#000;white-space:pre;letter-spacing:0.060px;">2020.07.23 16:10</div><div style="left:632.50px;top:251.69px;font-size:11px;line-height:11px;color:#000;white-space:pre;letter-spacing:-0.038px;">1.15544</div><div style="left:716.10px;top:251.69px;font-size:11px;line-height:11px;color:#000;white-space:pre;letter-spacing:-0.038px;">1.15553</div><div style="left:798.90px;top:251.69px;font-size:11px;line-height:11px;color:#000;white-space:pre;letter-spacing:-0.038px;">1.15521</div><div style="left:882.40px;top:251.69px;font-size:11px;line-height:11px;color:#000;white-space:pre;letter-spacing:-0.038px;">1.15532</div><div style="left:989.60px;top:251.69px;font-size:11px;line-height:11px;color:#000;white-space:pre;letter-spacing:0.180px;">140</div><div style="left:454px;top:268px;width:557px;height:19px;background:#ebebeb;"></div><div style="left:454px;top:287px;width:557px;height:1px;background:#d4d4d4;"></div><div style="left:592px;top:268px;width:1px;height:19px;background:#d4d4d4;"></div><div style="left:675px;top:268px;width:1px;height:19px;background:#d4d4d4;"></div><div style="left:758px;top:268px;width:1px;height:19px;background:#d4d4d4;"></div><div style="left:841px;top:268px;width:1px;height:19px;background:#d4d4d4;"></div><div style="left:924px;top:268px;width:1px;height:19px;background:#d4d4d4;"></div><svg style="left:461px;top:270px" width="9" height="15" viewBox="0 0 9 15"><path d="M4.5,0 V14" stroke="#15527f" stroke-width="1.1"/><rect x="1.5" y="3" width="6" height="8.5" rx="1" fill="#fff" stroke="#15527f" stroke-width="1.1"/></svg><div style="left:477.00px;top:271.69px;font-size:11px;line-height:11px;color:#000;white-space:pre;letter-spacing:0.060px;">2020.07.23 16:09</div><div style="left:632.50px;top:271.69px;font-size:11px;line-height:11px;color:#000;white-space:pre;letter-spacing:-0.038px;">1.15537</div><div style="left:716.10px;top:271.69px;font-size:11px;line-height:11px;color:#000;white-space:pre;letter-spacing:-0.038px;">1.15547</div><div style="left:798.90px;top:271.69px;font-size:11px;line-height:11px;color:#000;white-space:pre;letter-spacing:-0.038px;">1.15526</div><div style="left:882.40px;top:271.69px;font-size:11px;line-height:11px;color:#000;white-space:pre;letter-spacing:-0.038px;">1.15544</div><div style="left:989.60px;top:271.69px;font-size:11px;line-height:11px;color:#000;white-space:pre;letter-spacing:0.180px;">158</div><div style="left:454px;top:307px;width:557px;height:1px;background:#d4d4d4;"></div><div style="left:592px;top:288px;width:1px;height:19px;background:#d4d4d4;"></div><div style="left:675px;top:288px;width:1px;height:19px;background:#d4d4d4;"></div><div style="left:758px;top:288px;width:1px;height:19px;background:#d4d4d4;"></div><div style="left:841px;top:288px;width:1px;height:19px;background:#d4d4d4;"></div><div style="left:924px;top:288px;width:1px;height:19px;background:#d4d4d4;"></div><svg style="left:461px;top:290px" width="9" height="15" viewBox="0 0 9 15"><path d="M4.5,0 V14" stroke="#15527f" stroke-width="1.1"/><rect x="1.5" y="3" width="6" height="8.5" rx="1" fill="#fff" stroke="#15527f" stroke-width="1.1"/></svg><div style="left:477.00px;top:291.69px;font-size:11px;line-height:11px;color:#000;white-space:pre;letter-spacing:0.060px;">2020.07.23 16:08</div><div style="left:632.50px;top:291.69px;font-size:11px;line-height:11px;color:#000;white-space:pre;letter-spacing:-0.038px;">1.15533</div><div style="left:716.10px;top:291.69px;font-size:11px;line-height:11px;color:#000;white-space:pre;letter-spacing:-0.038px;">1.15543</div><div style="left:798.90px;top:291.69px;font-size:11px;line-height:11px;color:#000;white-space:pre;letter-spacing:-0.038px;">1.15523</div><div style="left:882.40px;top:291.69px;font-size:11px;line-height:11px;color:#000;white-space:pre;letter-spacing:-0.038px;">1.15537</div><div style="left:989.60px;top:291.69px;font-size:11px;line-height:11px;color:#000;white-space:pre;letter-spacing:0.180px;">181</div><div style="left:454px;top:308px;width:557px;height:19px;background:#ebebeb;"></div><div style="left:454px;top:327px;width:557px;height:1px;background:#d4d4d4;"></div><div style="left:592px;top:308px;width:1px;height:19px;background:#d4d4d4;"></div><div style="left:675px;top:308px;width:1px;height:19px;background:#d4d4d4;"></div><div style="left:758px;top:308px;width:1px;height:19px;background:#d4d4d4;"></div><div style="left:841px;top:308px;width:1px;height:19px;background:#d4d4d4;"></div><div style="left:924px;top:308px;width:1px;height:19px;background:#d4d4d4;"></div><svg style="left:461px;top:310px" width="9" height="15" viewBox="0 0 9 15"><path d="M4.5,0 V14" stroke="#15527f" stroke-width="1.1"/><rect x="1.5" y="3" width="6" height="8.5" rx="1" fill="#fff" stroke="#15527f" stroke-width="1.1"/></svg><div style="left:477.00px;top:311.69px;font-size:11px;line-height:11px;color:#000;white-space:pre;letter-spacing:0.060px;">2020.07.23 16:07</div><div style="left:632.50px;top:311.69px;font-size:11px;line-height:11px;color:#000;white-space:pre;letter-spacing:-0.038px;">1.15516</div><div style="left:716.10px;top:311.69px;font-size:11px;line-height:11px;color:#000;white-space:pre;letter-spacing:-0.038px;">1.15535</div><div style="left:798.90px;top:311.69px;font-size:11px;line-height:11px;color:#000;white-space:pre;letter-spacing:-0.038px;">1.15507</div><div style="left:882.40px;top:311.69px;font-size:11px;line-height:11px;color:#000;white-space:pre;letter-spacing:-0.038px;">1.15533</div><div style="left:989.60px;top:311.69px;font-size:11px;line-height:11px;color:#000;white-space:pre;letter-spacing:0.180px;">139</div><div style="left:454px;top:347px;width:557px;height:1px;background:#d4d4d4;"></div><div style="left:592px;top:328px;width:1px;height:19px;background:#d4d4d4;"></div><div style="left:675px;top:328px;width:1px;height:19px;background:#d4d4d4;"></div><div style="left:758px;top:328px;width:1px;height:19px;background:#d4d4d4;"></div><div style="left:841px;top:328px;width:1px;height:19px;background:#d4d4d4;"></div><div style="left:924px;top:328px;width:1px;height:19px;background:#d4d4d4;"></div><svg style="left:461px;top:330px" width="9" height="15" viewBox="0 0 9 15"><path d="M4.5,0 V14" stroke="#15527f" stroke-width="1.1"/><rect x="1.5" y="3" width="6" height="8.5" rx="1" fill="#fff" stroke="#15527f" stroke-width="1.1"/></svg><div style="left:477.00px;top:331.69px;font-size:11px;line-height:11px;color:#000;white-space:pre;letter-spacing:0.060px;">2020.07.23 16:06</div><div style="left:632.50px;top:331.69px;font-size:11px;line-height:11px;color:#000;white-space:pre;letter-spacing:-0.038px;">1.15475</div><div style="left:716.10px;top:331.69px;font-size:11px;line-height:11px;color:#000;white-space:pre;letter-spacing:-0.038px;">1.15516</div><div style="left:798.90px;top:331.69px;font-size:11px;line-height:11px;color:#000;white-space:pre;letter-spacing:-0.038px;">1.15474</div><div style="left:882.40px;top:331.69px;font-size:11px;line-height:11px;color:#000;white-space:pre;letter-spacing:-0.038px;">1.15516</div><div style="left:989.60px;top:331.69px;font-size:11px;line-height:11px;color:#000;white-space:pre;letter-spacing:0.180px;">149</div><div style="left:454px;top:348px;width:557px;height:19px;background:#ebebeb;"></div><div style="left:454px;top:367px;width:557px;height:1px;background:#d4d4d4;"></div><div style="left:592px;top:348px;width:1px;height:19px;background:#d4d4d4;"></div><div style="left:675px;top:348px;width:1px;height:19px;background:#d4d4d4;"></div><div style="left:758px;top:348px;width:1px;height:19px;background:#d4d4d4;"></div><div style="left:841px;top:348px;width:1px;height:19px;background:#d4d4d4;"></div><div style="left:924px;top:348px;width:1px;height:19px;background:#d4d4d4;"></div><div style="left:1002.17px;top:351.69px;font-size:11px;line-height:11px;color:#000;white-space:pre;">6</div><div style="left:454px;top:387px;width:557px;height:1px;background:#d4d4d4;"></div><div style="left:592px;top:368px;width:1px;height:19px;background:#d4d4d4;"></div><div style="left:675px;top:368px;width:1px;height:19px;background:#d4d4d4;"></div><div style="left:758px;top:368px;width:1px;height:19px;background:#d4d4d4;"></div><div style="left:841px;top:368px;width:1px;height:19px;background:#d4d4d4;"></div><div style="left:924px;top:368px;width:1px;height:19px;background:#d4d4d4;"></div><div style="left:1002.17px;top:371.69px;font-size:11px;line-height:11px;color:#000;white-space:pre;">1</div><div style="left:454px;top:388px;width:557px;height:19px;background:#ebebeb;"></div><div style="left:454px;top:407px;width:557px;height:1px;background:#d4d4d4;"></div><div style="left:592px;top:388px;width:1px;height:19px;background:#d4d4d4;"></div><div style="left:675px;top:388px;width:1px;height:19px;background:#d4d4d4;"></div><div style="left:758px;top:388px;width:1px;height:19px;background:#d4d4d4;"></div><div style="left:841px;top:388px;width:1px;height:19px;background:#d4d4d4;"></div><div style="left:924px;top:388px;width:1px;height:19px;background:#d4d4d4;"></div><div style="left:1002.17px;top:391.69px;font-size:11px;line-height:11px;color:#000;white-space:pre;">4</div><div style="left:454px;top:427px;width:557px;height:1px;background:#d4d4d4;"></div><div style="left:592px;top:408px;width:1px;height:19px;background:#d4d4d4;"></div><div style="left:675px;top:408px;width:1px;height:19px;background:#d4d4d4;"></div><div style="left:758px;top:408px;width:1px;height:19px;background:#d4d4d4;"></div><div style="left:841px;top:408px;width:1px;height:19px;background:#d4d4d4;"></div><div style="left:924px;top:408px;width:1px;height:19px;background:#d4d4d4;"></div><div style="left:1002.17px;top:411.69px;font-size:11px;line-height:11px;color:#000;white-space:pre;">2</div><div style="left:454px;top:428px;width:557px;height:19px;background:#ebebeb;"></div><div style="left:454px;top:447px;width:557px;height:1px;background:#d4d4d4;"></div><div style="left:592px;top:428px;width:1px;height:19px;background:#d4d4d4;"></div><div style="left:675px;top:428px;width:1px;height:19px;background:#d4d4d4;"></div><div style="left:758px;top:428px;width:1px;height:19px;background:#d4d4d4;"></div><div style="left:841px;top:428px;width:1px;height:19px;background:#d4d4d4;"></div><div style="left:924px;top:428px;width:1px;height:19px;background:#d4d4d4;"></div><div style="left:1002.17px;top:431.69px;font-size:11px;line-height:11px;color:#000;white-space:pre;">5</div><div style="left:454px;top:467px;width:557px;height:1px;background:#d4d4d4;"></div><div style="left:592px;top:448px;width:1px;height:19px;background:#d4d4d4;"></div><div style="left:675px;top:448px;width:1px;height:19px;background:#d4d4d4;"></div><div style="left:758px;top:448px;width:1px;height:19px;background:#d4d4d4;"></div><div style="left:841px;top:448px;width:1px;height:19px;background:#d4d4d4;"></div><div style="left:924px;top:448px;width:1px;height:19px;background:#d4d4d4;"></div><div style="left:1002.17px;top:451.69px;font-size:11px;line-height:11px;color:#000;white-space:pre;">8</div><div style="left:454px;top:468px;width:557px;height:19px;background:#ebebeb;"></div><div style="left:454px;top:487px;width:557px;height:1px;background:#d4d4d4;"></div><div style="left:592px;top:468px;width:1px;height:19px;background:#d4d4d4;"></div><div style="left:675px;top:468px;width:1px;height:19px;background:#d4d4d4;"></div><div style="left:758px;top:468px;width:1px;height:19px;background:#d4d4d4;"></div><div style="left:841px;top:468px;width:1px;height:19px;background:#d4d4d4;"></div><div style="left:924px;top:468px;width:1px;height:19px;background:#d4d4d4;"></div><div style="left:1002.17px;top:471.69px;font-size:11px;line-height:11px;color:#000;white-space:pre;">0</div><div style="left:454px;top:507px;width:557px;height:1px;background:#d4d4d4;"></div><div style="left:592px;top:488px;width:1px;height:19px;background:#d4d4d4;"></div><div style="left:675px;top:488px;width:1px;height:19px;background:#d4d4d4;"></div><div style="left:758px;top:488px;width:1px;height:19px;background:#d4d4d4;"></div><div style="left:841px;top:488px;width:1px;height:19px;background:#d4d4d4;"></div><div style="left:924px;top:488px;width:1px;height:19px;background:#d4d4d4;"></div><div style="left:1002.17px;top:491.69px;font-size:11px;line-height:11px;color:#000;white-space:pre;">5</div><div style="left:454px;top:508px;width:557px;height:19px;background:#ebebeb;"></div><div style="left:454px;top:527px;width:557px;height:1px;background:#d4d4d4;"></div><div style="left:592px;top:508px;width:1px;height:19px;background:#d4d4d4;"></div><div style="left:675px;top:508px;width:1px;height:19px;background:#d4d4d4;"></div><div style="left:758px;top:508px;width:1px;height:19px;background:#d4d4d4;"></div><div style="left:841px;top:508px;width:1px;height:19px;background:#d4d4d4;"></div><div style="left:924px;top:508px;width:1px;height:19px;background:#d4d4d4;"></div><div style="left:1002.17px;top:511.69px;font-size:11px;line-height:11px;color:#000;white-space:pre;">8</div><div style="left:592px;top:528px;width:1px;height:6px;background:#d4d4d4;"></div><div style="left:675px;top:528px;width:1px;height:6px;background:#d4d4d4;"></div><div style="left:758px;top:528px;width:1px;height:6px;background:#d4d4d4;"></div><div style="left:841px;top:528px;width:1px;height:6px;background:#d4d4d4;"></div><div style="left:924px;top:528px;width:1px;height:6px;background:#d4d4d4;"></div><div style="left:454px;top:534px;width:557px;height:9px;background:#f0f0f0;"></div><div style="left:453px;top:534px;width:578px;height:1px;background:#828790;"></div><div style="left:1011px;top:162px;width:18px;height:372px;background:#f0f0f0;"></div><div style="left:1013px;top:181px;width:15px;height:16px;background:#cdcdcd;"></div><svg style="left:1016px;top:169px" width="9" height="6" viewBox="0 0 9 6"><path d="M1,5 L4.5,1.5 L8,5" stroke="#606060" stroke-width="1.6" fill="none"/></svg><svg style="left:1016px;top:521px" width="9" height="6" viewBox="0 0 9 6"><path d="M1,1 L4.5,4.5 L8,1" stroke="#606060" stroke-width="1.6" fill="none"/></svg><div style="left:848px;top:543px;width:182px;height:22px;background:#e1e1e1;border:1px solid #adadad;"></div><div style="left:1000.50px;top:548.19px;font-size:11px;line-height:11px;color:#000;white-space:pre;">r</div><div style="left:445px;top:337px;width:556px;height:351px;background:#f0f0f0;border:1px solid #383838;box-shadow:2px 4px 12px rgba(0,0,0,0.3);"></div><div style="left:446px;top:338px;width:554px;height:30px;background:#fff;"></div><div style="left:454.00px;top:346.84px;font-size:12px;line-height:12px;color:#000;white-space:pre;letter-spacing:-0.370px;">Importar: EURUSD,M1</div><div style="left:929.00px;top:346.84px;font-size:12px;line-height:12px;color:#000;white-space:pre;">?</div><svg style="left:972px;top:347px" width="12" height="12" viewBox="0 0 12 12"><path d="M0.5,0.5 L11.5,11.5 M11.5,0.5 L0.5,11.5" stroke="#111" stroke-width="1.1"/></svg><div style="left:510.80px;top:389.59px;font-size:11px;line-height:11px;color:#000;white-space:pre;letter-spacing:-0.131px;">Archivo:</div><div style="left:496.70px;top:416.29px;font-size:11px;line-height:11px;color:#000;white-space:pre;letter-spacing:-0.164px;">Separador:</div><div style="left:471.50px;top:443.99px;font-size:11px;line-height:11px;color:#000;white-space:pre;letter-spacing:-0.263px;">Desplazamiento:</div><div style="left:559px;top:384px;width:353px;height:20px;background:#fff;border:1px solid #7a7a7a;"></div><div style="left:564.60px;top:389.59px;font-size:11px;line-height:11px;color:#000;white-space:pre;letter-spacing:-0.262px;">C:\Users\Tomas\Desktop\EURUSD_m5_BidAndAsk.csv</div><div style="left:920px;top:384px;width:66px;height:21px;background:#e1e1e1;border:1px solid #adadad;"></div><div style="left:924.00px;top:389.59px;font-size:11px;line-height:11px;color:#000;white-space:pre;letter-spacing:0.179px;">Examinar...</div><div style="left:559px;top:412px;width:68px;height:21px;background:#fff;border:1px solid #7a7a7a;"></div><div style="left:564.50px;top:416.69px;font-size:11px;line-height:11px;color:#000;white-space:pre;">,</div><svg style="left:612px;top:420px" width="10" height="6" viewBox="0 0 10 6"><path d="M0.5,0.5 L5,5 L9.5,0.5" stroke="#444" stroke-width="1" fill="none"/></svg><div style="left:716px;top:412px;width:53px;height:21px;background:#fff;border:1px solid #7a7a7a;"></div><div style="left:721.50px;top:416.69px;font-size:11px;line-height:11px;color:#000;white-space:pre;">0</div><svg style="left:754px;top:420px" width="10" height="6" viewBox="0 0 10 6"><path d="M0.5,0.5 L5,5 L9.5,0.5" stroke="#444" stroke-width="1" fill="none"/></svg><div style="left:866px;top:412px;width:53px;height:21px;background:#fff;border:1px solid #7a7a7a;"></div><div style="left:871.50px;top:416.69px;font-size:11px;line-height:11px;color:#000;white-space:pre;">0</div><svg style="left:904px;top:420px" width="10" height="6" viewBox="0 0 10 6"><path d="M0.5,0.5 L5,5 L9.5,0.5" stroke="#444" stroke-width="1" fill="none"/></svg><div style="left:559px;top:440px;width:53px;height:21px;background:#fff;border:1px solid #7a7a7a;"></div><div style="left:564.50px;top:444.69px;font-size:11px;line-height:11px;color:#000;white-space:pre;">0</div><svg style="left:597px;top:448px" width="10" height="6" viewBox="0 0 10 6"><path d="M0.5,0.5 L5,5 L9.5,0.5" stroke="#444" stroke-width="1" fill="none"/></svg><div style="left:676.60px;top:416.49px;font-size:11px;line-height:11px;color:#000;white-space:pre;letter-spacing:-0.142px;">Omitir:</div><div style="left:775.60px;top:416.49px;font-size:11px;line-height:11px;color:#000;white-space:pre;letter-spacing:-0.460px;">columnas</div><div style="left:926.00px;top:416.49px;font-size:11px;line-height:11px;color:#000;white-space:pre;letter-spacing:-0.312px;">filas</div><div style="left:618.60px;top:443.99px;font-size:11px;line-height:11px;color:#000;white-space:pre;letter-spacing:-0.226px;">horas</div><div style="left:716px;top:444px;width:14px;height:14px;background:#fff;border:1px solid #333;"></div><div style="left:731.70px;top:446.19px;font-size:11px;line-height:11px;color:#000;white-space:pre;letter-spacing:-0.234px;">Utilizar sólo seleccionados</div><div style="left:866px;top:445px;width:13px;height:13px;background:#fff;border:1px solid #333;"></div><svg style="left:867px;top:446px" width="11" height="11" viewBox="0 0 11 11"><path d="M1.5,5.5 L4.2,8.5 L9.5,2" stroke="#222" stroke-width="1.2" fill="none"/></svg><div style="left:880.70px;top:446.19px;font-size:11px;line-height:11px;color:#000;white-space:pre;letter-spacing:-0.359px;">Volumen</div><div style="left:461px;top:474px;width:525px;height:172px;background:#fff;border:1px solid #828790;"></div><div style="left:469.00px;top:482.19px;font-size:11px;line-height:11px;color:#000;white-space:pre;letter-spacing:-0.214px;">Tiempo</div><div style="left:621.70px;top:482.19px;font-size:11px;line-height:11px;color:#000;white-space:pre;letter-spacing:-0.025px;">Apertura</div><div style="left:706.00px;top:482.19px;font-size:11px;line-height:11px;color:#000;white-space:pre;letter-spacing:-0.419px;">Máximo</div><div style="left:786.00px;top:482.19px;font-size:11px;line-height:11px;color:#000;white-space:pre;letter-spacing:-0.344px;">Mínimo</div><div style="left:868.80px;top:482.19px;font-size:11px;line-height:11px;color:#000;white-space:pre;letter-spacing:-0.159px;">Cierre</div><div style="left:935.00px;top:482.19px;font-size:11px;line-height:11px;color:#000;white-space:pre;letter-spacing:-0.116px;">Volumen</div><div style="left:592px;top:476px;width:1px;height:24px;background:#e5e5e5;"></div><div style="left:670px;top:476px;width:1px;height:24px;background:#e5e5e5;"></div><div style="left:748px;top:476px;width:1px;height:24px;background:#e5e5e5;"></div><div style="left:826px;top:476px;width:1px;height:24px;background:#e5e5e5;"></div><div style="left:904px;top:476px;width:1px;height:24px;background:#e5e5e5;"></div><div style="left:983px;top:476px;width:1px;height:24px;background:#e5e5e5;"></div><div style="left:645px;top:657px;width:73px;height:21px;background:#e1e1e1;border:2px solid #0078d7;"></div><div style="left:662.50px;top:662.69px;font-size:11px;line-height:11px;color:#000;white-space:pre;letter-spacing:0.011px;">Aceptar</div><div style="left:728px;top:657px;width:73px;height:21px;background:#e1e1e1;border:1px solid #adadad;"></div><div style="left:743.50px;top:662.69px;font-size:11px;line-height:11px;color:#000;white-space:pre;letter-spacing:-0.254px;">Cancelar</div></body></html>
